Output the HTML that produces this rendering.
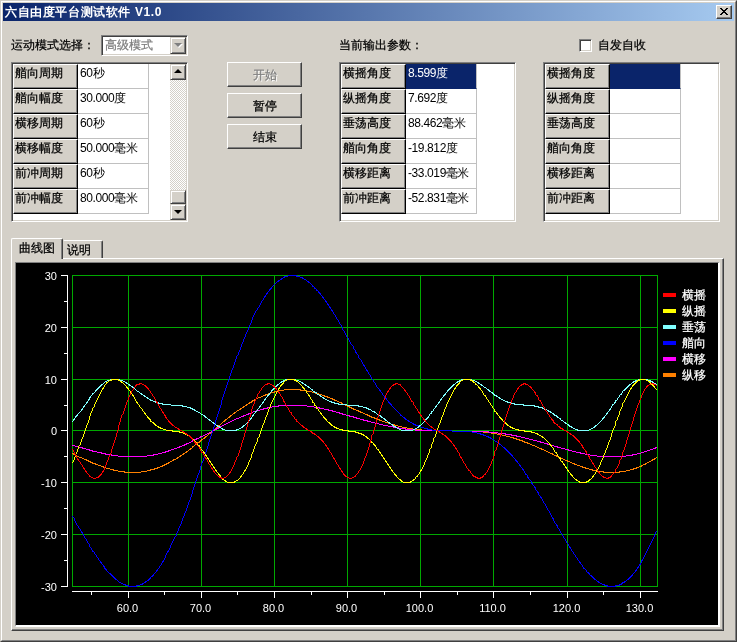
<!DOCTYPE html>
<html lang="zh">
<head>
<meta charset="utf-8">
<title>六自由度平台测试软件 V1.0</title>
<style>
*{box-sizing:border-box;margin:0;padding:0}
html,body{width:737px;height:642px;overflow:hidden;background:#d4d0c8}
body{position:relative;font-family:"Liberation Sans",sans-serif;font-size:12px;line-height:12px;color:#000;-webkit-text-stroke:0.25px}
.abs,body>div,body>svg{position:absolute}
body>div{will-change:transform}
/* window frame */
.frame{left:0;top:0;width:737px;height:642px;border-right:1px solid #404040;border-bottom:1px solid #404040;border-left:1px solid #d4d0c8;border-top:1px solid #d4d0c8}
.frame2{left:1px;top:1px;width:735px;height:640px;border-left:1px solid #fff;border-top:1px solid #fff;border-right:1px solid #808080;border-bottom:1px solid #808080}
.title{left:3px;top:3px;width:731px;height:18px;background:linear-gradient(to right,#0a246a,#a6caf0);color:#fff;font-weight:bold;white-space:nowrap}
.title span{position:absolute;left:2px;top:3px;letter-spacing:0.6px}
.close{left:716px;top:5px;width:16px;height:14px;background:#d4d0c8;border-left:1px solid #fff;border-top:1px solid #fff;border-right:1px solid #404040;border-bottom:1px solid #404040;box-shadow:inset -1px -1px 0 #808080}
.close svg{position:absolute;left:3px;top:2px}
.lbl{white-space:nowrap}
/* combo */
.combo{left:101px;top:35px;width:87px;height:21px;background:#fff;border-left:1px solid #808080;border-top:1px solid #808080;border-right:1px solid #fff;border-bottom:1px solid #fff;box-shadow:inset 1px 1px 0 #404040,inset -1px -1px 0 #d4d0c8;color:#808080}
.combo span{position:absolute;left:3px;top:3px;white-space:nowrap}
.combo .dd{position:absolute;right:1px;top:1px;width:16px;height:17px;background:#d4d0c8;border-left:1px solid #d4d0c8;border-top:1px solid #d4d0c8;border-right:1px solid #404040;border-bottom:1px solid #404040;box-shadow:inset 1px 1px 0 #fff,inset -1px -1px 0 #808080}
.combo .dd i{position:absolute;left:3px;top:5px;width:0;height:0;border-left:4px solid transparent;border-right:4px solid transparent;border-top:4px solid #808080}
.combo .dd i.w{left:4px;top:6px;border-top-color:#fff}
/* list boxes */
.lb{top:62px;width:177px;height:160px;background:#fff;border-left:1px solid #808080;border-top:1px solid #808080;border-right:1px solid #fff;border-bottom:1px solid #fff;box-shadow:inset 1px 1px 0 #404040,inset -1px -1px 0 #d4d0c8}
.lb>div{position:absolute}
.hc{left:1px;width:65px;height:25px;margin-top:-1px;background:#d4d0c8;border-left:1px solid #fff;border-top:1px solid #fff;border-right:1px solid #000;border-bottom:1px solid #000;box-shadow:inset -1px -1px 0 #808080}
.hc span{position:absolute;left:1px;top:2px;white-space:nowrap}
.vc{left:66px;width:71px;height:25px;margin-top:-1px;border-right:1px solid #c0c0c0;border-bottom:1px solid #c0c0c0}
.vc span{position:absolute;left:2px;top:3px;white-space:nowrap;letter-spacing:-0.4px}
.vc.sel{background:#0a246a;color:#fff;border-color:#0a246a;border-right-color:#c0c0c0}
.sb{left:158px;top:1px;width:16px;height:156px;background:#eae8e4;background:#d4d0c8 repeating-conic-gradient(#fff 0 25%,#d4d0c8 0 50%) 0 0/2px 2px}
.sb>div{position:absolute;left:0;width:16px;background:#d4d0c8;border-left:1px solid #d4d0c8;border-top:1px solid #d4d0c8;border-right:1px solid #404040;border-bottom:1px solid #404040;box-shadow:inset 1px 1px 0 #fff,inset -1px -1px 0 #808080}
.sbtn{height:16px}
.sbtn.up{top:0}.sbtn.dn{top:140px}
.thumb{top:126px;height:14px}
.sbtn i{position:absolute;left:3px;width:0;height:0;border-left:4px solid transparent;border-right:4px solid transparent}
.up i{top:4px;border-bottom:4px solid #000}
.dn i{top:5px;border-top:4px solid #000}
/* buttons */
.btn{left:227px;width:75px;height:25px;background:#d4d0c8;border-left:1px solid #fff;border-top:1px solid #fff;border-right:1px solid #404040;border-bottom:1px solid #404040;box-shadow:inset -1px -1px 0 #808080;text-align:center}
.btn span{position:absolute;left:0;right:0;top:6px}
.btn.dis{color:#808080;text-shadow:1px 1px 0 #fff}
/* checkbox */
.cb{left:579px;top:39px;width:13px;height:13px;background:#fff;border-left:1px solid #808080;border-top:1px solid #808080;border-right:1px solid #fff;border-bottom:1px solid #fff;box-shadow:inset 1px 1px 0 #404040,inset -1px -1px 0 #d4d0c8}
/* tabs */
.tabbody{left:11px;top:258px;width:713px;height:373px;border-left:1px solid #fff;border-top:1px solid #fff;border-right:1px solid #404040;border-bottom:1px solid #404040;box-shadow:inset -1px -1px 0 #808080}
.tab{background:#d4d0c8;border-left:1px solid #fff;border-top:1px solid #fff;border-right:1px solid #404040;border-radius:2px 2px 0 0;box-shadow:inset -1px 0 0 #808080}
.tab span{position:absolute;white-space:nowrap}
.tab.on{left:11px;top:238px;width:52px;height:21px}
.tab.on span{left:7px;top:3px}
.tab.off{left:63px;top:240px;width:40px;height:18px;border-left-color:#d4d0c8;border-radius:0 2px 0 0}
.tab.off span{left:3px;top:3px}
.chartwrap{left:15px;top:262px;width:705px;height:365px;border-left:1px solid #808080;border-top:1px solid #808080;border-right:2px solid #fff;border-bottom:2px solid #fff;background:#000}
svg.chart{left:16px;top:263px}
.yl,.xl,.lg{color:#fff;white-space:nowrap}
.yl,.xl,.title,.vc{-webkit-text-stroke:0}
.yl{left:19.6px;width:37px;text-align:right;font-size:11px}
.xl{top:602px;width:41px;text-align:center;font-size:11px}
.lg{left:682px}
</style>
</head>
<body>
<div class="frame"></div>
<div class="frame2"></div>
<div class="title"><span>六自由度平台测试软件 V1.0</span></div>
<div class="close"><svg width="8" height="7" viewBox="0 0 8 7" shape-rendering="crispEdges"><path d="M0 0h2v1h1v1h2V1h1V0h2v1H7v1H6v1H5v1h1v1h1v1h1v1H6V6H5V5H3v1H2v1H0V6h1V5h1V4h1V3H2V2H1V1H0z" fill="#000"/></svg></div>

<div class="lbl" style="left:11px;top:39px">运动模式选择：</div>
<div class="combo"><span>高级模式</span><div class="dd"><i class="w"></i><i></i></div></div>
<div class="lb" style="left:11px">
<div class="hc" style="top:2px"><span>艏向周期</span></div>
<div class="vc" style="top:2px"><span>60秒</span></div>
<div class="hc" style="top:27px"><span>艏向幅度</span></div>
<div class="vc" style="top:27px"><span>30.000度</span></div>
<div class="hc" style="top:52px"><span>横移周期</span></div>
<div class="vc" style="top:52px"><span>60秒</span></div>
<div class="hc" style="top:77px"><span>横移幅度</span></div>
<div class="vc" style="top:77px"><span>50.000毫米</span></div>
<div class="hc" style="top:102px"><span>前冲周期</span></div>
<div class="vc" style="top:102px"><span>60秒</span></div>
<div class="hc" style="top:127px"><span>前冲幅度</span></div>
<div class="vc" style="top:127px"><span>80.000毫米</span></div>
<div class="sb"><div class="sbtn up"><i></i></div><div class="thumb"></div><div class="sbtn dn"><i></i></div></div>
</div>

<div class="btn dis" style="top:62px"><span>开始</span></div>
<div class="btn" style="top:93px"><span>暂停</span></div>
<div class="btn" style="top:124px"><span>结束</span></div>

<div class="lbl" style="left:339px;top:39px">当前输出参数：</div>
<div class="lb" style="left:339px">
<div class="hc" style="top:2px"><span>横摇角度</span></div>
<div class="vc sel" style="top:2px"><span>8.599度</span></div>
<div class="hc" style="top:27px"><span>纵摇角度</span></div>
<div class="vc" style="top:27px"><span>7.692度</span></div>
<div class="hc" style="top:52px"><span>垂荡高度</span></div>
<div class="vc" style="top:52px"><span>88.462毫米</span></div>
<div class="hc" style="top:77px"><span>艏向角度</span></div>
<div class="vc" style="top:77px"><span>-19.812度</span></div>
<div class="hc" style="top:102px"><span>横移距离</span></div>
<div class="vc" style="top:102px"><span>-33.019毫米</span></div>
<div class="hc" style="top:127px"><span>前冲距离</span></div>
<div class="vc" style="top:127px"><span>-52.831毫米</span></div>
</div>

<div class="cb"></div>
<div class="lbl" style="left:598px;top:39px">自发自收</div>
<div class="lb" style="left:543px">
<div class="hc" style="top:2px"><span>横摇角度</span></div>
<div class="vc sel" style="top:2px"><span></span></div>
<div class="hc" style="top:27px"><span>纵摇角度</span></div>
<div class="vc" style="top:27px"><span></span></div>
<div class="hc" style="top:52px"><span>垂荡高度</span></div>
<div class="vc" style="top:52px"><span></span></div>
<div class="hc" style="top:77px"><span>艏向角度</span></div>
<div class="vc" style="top:77px"><span></span></div>
<div class="hc" style="top:102px"><span>横移距离</span></div>
<div class="vc" style="top:102px"><span></span></div>
<div class="hc" style="top:127px"><span>前冲距离</span></div>
<div class="vc" style="top:127px"><span></span></div>
</div>

<div class="tabbody"></div>
<div class="tab off"><span>说明</span></div>
<div class="tab on"><span>曲线图</span></div>
<div class="chartwrap"></div>
<svg class="chart" width="702" height="362" viewBox="16 263 702 362" shape-rendering="crispEdges">
<rect x="16" y="263" width="702" height="362" fill="#000"/>
<rect x="128" y="275" width="1" height="312" fill="#00a800"/>
<rect x="201" y="275" width="1" height="312" fill="#00a800"/>
<rect x="274" y="275" width="1" height="312" fill="#00a800"/>
<rect x="347" y="275" width="1" height="312" fill="#00a800"/>
<rect x="420" y="275" width="1" height="312" fill="#00a800"/>
<rect x="493" y="275" width="1" height="312" fill="#00a800"/>
<rect x="567" y="275" width="1" height="312" fill="#00a800"/>
<rect x="640" y="275" width="1" height="312" fill="#00a800"/>
<rect x="72" y="586" width="586" height="1" fill="#00a800"/>
<rect x="72" y="534" width="586" height="1" fill="#00a800"/>
<rect x="72" y="482" width="586" height="1" fill="#00a800"/>
<rect x="72" y="430" width="586" height="1" fill="#00a800"/>
<rect x="72" y="379" width="586" height="1" fill="#00a800"/>
<rect x="72" y="327" width="586" height="1" fill="#00a800"/>
<rect x="72" y="275" width="586" height="1" fill="#00a800"/>
<rect x="72" y="275" width="1" height="312" fill="#00a800"/>
<rect x="657" y="275" width="1" height="312" fill="#00a800"/>
<path fill="#ff8000" d="M72 453v1h1v-1zM73 453v2h1v-2zM74 454v1h1v-1zM75 455v1h1v-1zM76 455v1h1v-1zM77 456v1h1v-1zM78 456v1h1v-1zM79 457v1h1v-1zM80 457v1h1v-1zM81 457v1h1v-1zM82 458v1h1v-1zM83 458v1h1v-1zM84 459v1h1v-1zM85 459v1h1v-1zM86 459v2h1v-2zM87 460v1h1v-1zM88 460v2h1v-2zM89 461v1h1v-1zM90 461v2h1v-2zM91 462v1h1v-1zM92 462v2h1v-2zM93 463v1h1v-1zM94 463v1h1v-1zM95 463v2h1v-2zM96 464v1h1v-1zM97 464v1h1v-1zM98 465v1h1v-1zM99 465v1h1v-1zM100 465v1h1v-1zM101 466v1h1v-1zM102 466v1h1v-1zM103 466v2h1v-2zM104 467v1h1v-1zM105 467v1h1v-1zM106 468v1h1v-1zM107 468v1h1v-1zM108 468v1h1v-1zM109 468v1h1v-1zM110 469v1h1v-1zM111 469v1h1v-1zM112 469v1h1v-1zM113 469v2h1v-2zM114 470v1h1v-1zM115 470v1h1v-1zM116 470v1h1v-1zM117 470v1h1v-1zM118 471v1h1v-1zM119 471v1h1v-1zM120 471v1h1v-1zM121 471v1h1v-1zM122 471v1h1v-1zM123 471v1h1v-1zM124 471v2h1v-2zM125 472v1h1v-1zM126 472v1h1v-1zM127 472v1h1v-1zM128 472v1h1v-1zM129 472v1h1v-1zM130 472v1h1v-1zM131 472v1h1v-1zM132 472v1h1v-1zM133 472v1h1v-1zM134 472v1h1v-1zM135 472v1h1v-1zM136 472v1h1v-1zM137 472v1h1v-1zM138 472v1h1v-1zM139 472v1h1v-1zM140 472v1h1v-1zM141 471v1h1v-1zM142 471v1h1v-1zM143 471v1h1v-1zM144 471v1h1v-1zM145 471v1h1v-1zM146 471v1h1v-1zM147 470v1h1v-1zM148 470v1h1v-1zM149 470v1h1v-1zM150 469v2h1v-2zM151 469v1h1v-1zM152 469v1h1v-1zM153 469v1h1v-1zM154 468v2h1v-2zM155 468v1h1v-1zM156 468v1h1v-1zM157 467v2h1v-2zM158 467v1h1v-1zM159 467v1h1v-1zM160 466v1h1v-1zM161 466v1h1v-1zM162 465v2h1v-2zM163 465v1h1v-1zM164 464v2h1v-2zM165 464v1h1v-1zM166 463v2h1v-2zM167 463v1h1v-1zM168 462v2h1v-2zM169 462v1h1v-1zM170 461v1h1v-1zM171 461v1h1v-1zM172 460v1h1v-1zM173 459v2h1v-2zM174 459v1h1v-1zM175 459v1h1v-1zM176 458v1h1v-1zM177 457v2h1v-2zM178 457v1h1v-1zM179 456v1h1v-1zM180 455v2h1v-2zM181 455v1h1v-1zM182 454v1h1v-1zM183 453v2h1v-2zM184 453v1h1v-1zM185 452v1h1v-1zM186 451v2h1v-2zM187 451v1h1v-1zM188 450v1h1v-1zM189 449v1h1v-1zM190 448v2h1v-2zM191 448v1h1v-1zM192 446v2h1v-2zM193 446v1h1v-1zM194 445v1h1v-1zM195 444v1h1v-1zM196 443v2h1v-2zM197 442v2h1v-2zM198 442v1h1v-1zM199 441v2h1v-2zM200 440v2h1v-2zM201 439v2h1v-2zM202 439v1h1v-1zM203 438v1h1v-1zM204 437v2h1v-2zM205 436v2h1v-2zM206 436v1h1v-1zM207 435v1h1v-1zM208 434v1h1v-1zM209 433v1h1v-1zM210 432v2h1v-2zM211 431v2h1v-2zM212 430v2h1v-2zM213 430v1h1v-1zM214 429v1h1v-1zM215 428v1h1v-1zM216 427v2h1v-2zM217 426v2h1v-2zM218 425v2h1v-2zM219 425v1h1v-1zM220 424v1h1v-1zM221 423v1h1v-1zM222 422v1h1v-1zM223 421v1h1v-1zM224 420v2h1v-2zM225 419v2h1v-2zM226 419v1h1v-1zM227 418v1h1v-1zM228 417v1h1v-1zM229 416v2h1v-2zM230 415v2h1v-2zM231 415v1h1v-1zM232 414v1h1v-1zM233 413v1h1v-1zM234 412v2h1v-2zM235 412v1h1v-1zM236 411v1h1v-1zM237 410v1h1v-1zM238 410v1h1v-1zM239 409v1h1v-1zM240 408v2h1v-2zM241 408v1h1v-1zM242 407v1h1v-1zM243 406v2h1v-2zM244 406v1h1v-1zM245 405v1h1v-1zM246 404v2h1v-2zM247 404v1h1v-1zM248 403v1h1v-1zM249 402v2h1v-2zM250 402v1h1v-1zM251 401v2h1v-2zM252 400v2h1v-2zM253 400v1h1v-1zM254 399v2h1v-2zM255 399v1h1v-1zM256 398v1h1v-1zM257 398v1h1v-1zM258 397v1h1v-1zM259 397v1h1v-1zM260 397v1h1v-1zM261 396v1h1v-1zM262 396v1h1v-1zM263 395v1h1v-1zM264 395v1h1v-1zM265 394v2h1v-2zM266 394v1h1v-1zM267 394v1h1v-1zM268 393v1h1v-1zM269 393v1h1v-1zM270 393v1h1v-1zM271 392v1h1v-1zM272 392v1h1v-1zM273 392v1h1v-1zM274 391v2h1v-2zM275 391v1h1v-1zM276 391v1h1v-1zM277 391v1h1v-1zM278 390v2h1v-2zM279 390v1h1v-1zM280 390v1h1v-1zM281 390v1h1v-1zM282 390v1h1v-1zM283 390v1h1v-1zM284 389v1h1v-1zM285 389v1h1v-1zM286 389v1h1v-1zM287 389v1h1v-1zM288 389v1h1v-1zM289 389v1h1v-1zM290 389v1h1v-1zM291 389v1h1v-1zM292 389v1h1v-1zM293 389v1h1v-1zM294 389v1h1v-1zM295 389v1h1v-1zM296 389v1h1v-1zM297 389v1h1v-1zM298 389v1h1v-1zM299 389v1h1v-1zM300 389v2h1v-2zM301 390v1h1v-1zM302 390v1h1v-1zM303 390v1h1v-1zM304 390v1h1v-1zM305 390v1h1v-1zM306 390v1h1v-1zM307 391v1h1v-1zM308 391v1h1v-1zM309 391v1h1v-1zM310 391v1h1v-1zM311 391v1h1v-1zM312 392v1h1v-1zM313 392v1h1v-1zM314 392v1h1v-1zM315 393v1h1v-1zM316 393v1h1v-1zM317 393v1h1v-1zM318 393v1h1v-1zM319 394v1h1v-1zM320 394v1h1v-1zM321 394v1h1v-1zM322 395v1h1v-1zM323 395v1h1v-1zM324 395v2h1v-2zM325 396v1h1v-1zM326 396v1h1v-1zM327 396v2h1v-2zM328 397v1h1v-1zM329 397v1h1v-1zM330 398v1h1v-1zM331 398v1h1v-1zM332 398v2h1v-2zM333 399v1h1v-1zM334 399v2h1v-2zM335 400v1h1v-1zM336 400v1h1v-1zM337 401v1h1v-1zM338 401v1h1v-1zM339 402v1h1v-1zM340 402v1h1v-1zM341 402v2h1v-2zM342 403v1h1v-1zM343 404v1h1v-1zM344 404v1h1v-1zM345 405v1h1v-1zM346 405v1h1v-1zM347 405v2h1v-2zM348 406v1h1v-1zM349 406v2h1v-2zM350 407v1h1v-1zM351 407v2h1v-2zM352 408v1h1v-1zM353 408v2h1v-2zM354 409v1h1v-1zM355 409v1h1v-1zM356 410v1h1v-1zM357 410v1h1v-1zM358 410v2h1v-2zM359 411v1h1v-1zM360 411v2h1v-2zM361 412v1h1v-1zM362 412v1h1v-1zM363 413v1h1v-1zM364 413v1h1v-1zM365 414v1h1v-1zM366 414v1h1v-1zM367 414v2h1v-2zM368 415v1h1v-1zM369 415v2h1v-2zM370 416v1h1v-1zM371 416v2h1v-2zM372 417v1h1v-1zM373 417v1h1v-1zM374 417v2h1v-2zM375 418v1h1v-1zM376 418v2h1v-2zM377 419v1h1v-1zM378 419v1h1v-1zM379 419v2h1v-2zM380 420v1h1v-1zM381 420v1h1v-1zM382 421v1h1v-1zM383 421v1h1v-1zM384 421v1h1v-1zM385 422v1h1v-1zM386 422v1h1v-1zM387 422v1h1v-1zM388 423v1h1v-1zM389 423v1h1v-1zM390 423v1h1v-1zM391 424v1h1v-1zM392 424v1h1v-1zM393 424v1h1v-1zM394 424v2h1v-2zM395 425v1h1v-1zM396 425v1h1v-1zM397 425v1h1v-1zM398 426v1h1v-1zM399 426v1h1v-1zM400 426v1h1v-1zM401 426v1h1v-1zM402 427v1h1v-1zM403 427v1h1v-1zM404 427v1h1v-1zM405 427v1h1v-1zM406 427v1h1v-1zM407 428v1h1v-1zM408 428v1h1v-1zM409 428v1h1v-1zM410 428v1h1v-1zM411 428v1h1v-1zM412 428v1h1v-1zM413 429v1h1v-1zM414 429v1h1v-1zM415 429v1h1v-1zM416 429v1h1v-1zM417 429v1h1v-1zM418 429v1h1v-1zM419 429v1h1v-1zM420 429v1h1v-1zM421 429v2h1v-2zM422 430v1h1v-1zM423 430v1h1v-1zM424 430v1h1v-1zM425 430v1h1v-1zM426 430v1h1v-1zM427 430v1h1v-1zM428 430v1h1v-1zM429 430v1h1v-1zM430 430v1h1v-1zM431 430v1h1v-1zM432 430v1h1v-1zM433 430v1h1v-1zM434 430v1h1v-1zM435 430v1h1v-1zM436 430v1h1v-1zM437 430v1h1v-1zM438 430v1h1v-1zM439 430v1h1v-1zM440 430v1h1v-1zM441 430v1h1v-1zM442 430v1h1v-1zM443 430v1h1v-1zM444 430v1h1v-1zM445 430v1h1v-1zM446 430v1h1v-1zM447 430v1h1v-1zM448 430v1h1v-1zM449 430v1h1v-1zM450 430v1h1v-1zM451 430v1h1v-1zM452 431v1h1v-1zM453 431v1h1v-1zM454 431v1h1v-1zM455 431v1h1v-1zM456 431v1h1v-1zM457 431v1h1v-1zM458 431v1h1v-1zM459 431v1h1v-1zM460 431v1h1v-1zM461 431v1h1v-1zM462 431v1h1v-1zM463 431v1h1v-1zM464 431v1h1v-1zM465 431v1h1v-1zM466 431v1h1v-1zM467 431v1h1v-1zM468 431v1h1v-1zM469 431v1h1v-1zM470 431v1h1v-1zM471 431v1h1v-1zM472 431v1h1v-1zM473 431v1h1v-1zM474 431v1h1v-1zM475 431v1h1v-1zM476 431v1h1v-1zM477 431v1h1v-1zM478 431v1h1v-1zM479 431v1h1v-1zM480 431v1h1v-1zM481 431v1h1v-1zM482 431v1h1v-1zM483 432v1h1v-1zM484 432v1h1v-1zM485 432v1h1v-1zM486 432v1h1v-1zM487 432v1h1v-1zM488 432v1h1v-1zM489 432v1h1v-1zM490 432v1h1v-1zM491 433v1h1v-1zM492 433v1h1v-1zM493 433v1h1v-1zM494 433v1h1v-1zM495 433v1h1v-1zM496 433v1h1v-1zM497 434v1h1v-1zM498 434v1h1v-1zM499 434v1h1v-1zM500 434v1h1v-1zM501 434v1h1v-1zM502 435v1h1v-1zM503 435v1h1v-1zM504 435v1h1v-1zM505 435v1h1v-1zM506 436v1h1v-1zM507 436v1h1v-1zM508 436v1h1v-1zM509 436v1h1v-1zM510 437v1h1v-1zM511 437v1h1v-1zM512 437v1h1v-1zM513 437v2h1v-2zM514 438v1h1v-1zM515 438v1h1v-1zM516 438v2h1v-2zM517 439v1h1v-1zM518 439v1h1v-1zM519 439v2h1v-2zM520 440v1h1v-1zM521 440v1h1v-1zM522 440v2h1v-2zM523 441v1h1v-1zM524 441v2h1v-2zM525 442v1h1v-1zM526 442v1h1v-1zM527 442v2h1v-2zM528 443v1h1v-1zM529 443v1h1v-1zM530 444v1h1v-1zM531 444v1h1v-1zM532 445v1h1v-1zM533 445v1h1v-1zM534 445v1h1v-1zM535 446v1h1v-1zM536 446v1h1v-1zM537 447v1h1v-1zM538 447v1h1v-1zM539 448v1h1v-1zM540 448v1h1v-1zM541 448v2h1v-2zM542 449v1h1v-1zM543 449v1h1v-1zM544 450v1h1v-1zM545 450v1h1v-1zM546 451v1h1v-1zM547 451v1h1v-1zM548 452v1h1v-1zM549 452v1h1v-1zM550 453v1h1v-1zM551 453v1h1v-1zM552 453v2h1v-2zM553 454v1h1v-1zM554 455v1h1v-1zM555 455v1h1v-1zM556 455v2h1v-2zM557 456v1h1v-1zM558 457v1h1v-1zM559 457v1h1v-1zM560 457v2h1v-2zM561 458v1h1v-1zM562 458v1h1v-1zM563 459v1h1v-1zM564 459v1h1v-1zM565 460v1h1v-1zM566 460v1h1v-1zM567 460v2h1v-2zM568 461v1h1v-1zM569 461v1h1v-1zM570 462v1h1v-1zM571 462v1h1v-1zM572 463v1h1v-1zM573 463v1h1v-1zM574 463v2h1v-2zM575 464v1h1v-1zM576 464v1h1v-1zM577 465v1h1v-1zM578 465v1h1v-1zM579 465v1h1v-1zM580 466v1h1v-1zM581 466v1h1v-1zM582 466v2h1v-2zM583 467v1h1v-1zM584 467v1h1v-1zM585 467v2h1v-2zM586 468v1h1v-1zM587 468v1h1v-1zM588 468v1h1v-1zM589 469v1h1v-1zM590 469v1h1v-1zM591 469v1h1v-1zM592 469v2h1v-2zM593 470v1h1v-1zM594 470v1h1v-1zM595 470v1h1v-1zM596 470v1h1v-1zM597 471v1h1v-1zM598 471v1h1v-1zM599 471v1h1v-1zM600 471v1h1v-1zM601 471v1h1v-1zM602 471v1h1v-1zM603 471v2h1v-2zM604 472v1h1v-1zM605 472v1h1v-1zM606 472v1h1v-1zM607 472v1h1v-1zM608 472v1h1v-1zM609 472v1h1v-1zM610 472v1h1v-1zM611 472v1h1v-1zM612 472v1h1v-1zM613 472v1h1v-1zM614 472v1h1v-1zM615 472v1h1v-1zM616 472v1h1v-1zM617 472v1h1v-1zM618 472v1h1v-1zM619 471v2h1v-2zM620 471v1h1v-1zM621 471v1h1v-1zM622 471v1h1v-1zM623 471v1h1v-1zM624 471v1h1v-1zM625 471v1h1v-1zM626 470v1h1v-1zM627 470v1h1v-1zM628 470v1h1v-1zM629 470v1h1v-1zM630 469v1h1v-1zM631 469v1h1v-1zM632 469v1h1v-1zM633 468v2h1v-2zM634 468v1h1v-1zM635 468v1h1v-1zM636 467v2h1v-2zM637 467v1h1v-1zM638 467v1h1v-1zM639 466v1h1v-1zM640 466v1h1v-1zM641 465v2h1v-2zM642 465v1h1v-1zM643 464v1h1v-1zM644 464v1h1v-1zM645 463v2h1v-2zM646 463v1h1v-1zM647 462v1h1v-1zM648 462v1h1v-1zM649 461v1h1v-1zM650 461v1h1v-1zM651 460v1h1v-1zM652 459v2h1v-2zM653 459v1h1v-1zM654 458v2h1v-2zM655 458v1h1v-1zM656 457v1h1v-1z"/>
<path fill="#ff00ff" d="M72 445v1h1v-1zM73 445v1h1v-1zM74 445v1h1v-1zM75 446v1h1v-1zM76 446v1h1v-1zM77 446v1h1v-1zM78 446v2h1v-2zM79 447v1h1v-1zM80 447v1h1v-1zM81 447v1h1v-1zM82 447v2h1v-2zM83 448v1h1v-1zM84 448v1h1v-1zM85 448v1h1v-1zM86 449v1h1v-1zM87 449v1h1v-1zM88 449v1h1v-1zM89 449v2h1v-2zM90 450v1h1v-1zM91 450v1h1v-1zM92 450v2h1v-2zM93 451v1h1v-1zM94 451v1h1v-1zM95 451v1h1v-1zM96 451v1h1v-1zM97 452v1h1v-1zM98 452v1h1v-1zM99 452v1h1v-1zM100 452v1h1v-1zM101 452v2h1v-2zM102 453v1h1v-1zM103 453v1h1v-1zM104 453v1h1v-1zM105 453v2h1v-2zM106 454v1h1v-1zM107 454v1h1v-1zM108 454v1h1v-1zM109 454v1h1v-1zM110 454v1h1v-1zM111 454v2h1v-2zM112 455v1h1v-1zM113 455v1h1v-1zM114 455v1h1v-1zM115 455v1h1v-1zM116 455v1h1v-1zM117 455v1h1v-1zM118 456v1h1v-1zM119 456v1h1v-1zM120 456v1h1v-1zM121 456v1h1v-1zM122 456v1h1v-1zM123 456v1h1v-1zM124 456v1h1v-1zM125 456v1h1v-1zM126 456v1h1v-1zM127 456v1h1v-1zM128 456v1h1v-1zM129 456v1h1v-1zM130 456v1h1v-1zM131 456v1h1v-1zM132 456v1h1v-1zM133 456v1h1v-1zM134 456v1h1v-1zM135 456v1h1v-1zM136 456v1h1v-1zM137 456v1h1v-1zM138 456v1h1v-1zM139 456v1h1v-1zM140 456v1h1v-1zM141 456v1h1v-1zM142 456v1h1v-1zM143 456v1h1v-1zM144 456v1h1v-1zM145 456v1h1v-1zM146 456v1h1v-1zM147 455v1h1v-1zM148 455v1h1v-1zM149 455v1h1v-1zM150 455v1h1v-1zM151 455v1h1v-1zM152 455v1h1v-1zM153 454v2h1v-2zM154 454v1h1v-1zM155 454v1h1v-1zM156 454v1h1v-1zM157 454v1h1v-1zM158 453v1h1v-1zM159 453v1h1v-1zM160 453v1h1v-1zM161 453v1h1v-1zM162 452v1h1v-1zM163 452v1h1v-1zM164 452v1h1v-1zM165 451v2h1v-2zM166 451v1h1v-1zM167 451v1h1v-1zM168 450v2h1v-2zM169 450v1h1v-1zM170 450v1h1v-1zM171 449v1h1v-1zM172 449v1h1v-1zM173 449v1h1v-1zM174 448v1h1v-1zM175 448v1h1v-1zM176 448v1h1v-1zM177 447v1h1v-1zM178 447v1h1v-1zM179 446v2h1v-2zM180 446v1h1v-1zM181 446v1h1v-1zM182 445v1h1v-1zM183 445v1h1v-1zM184 444v2h1v-2zM185 444v1h1v-1zM186 443v2h1v-2zM187 443v1h1v-1zM188 443v1h1v-1zM189 442v1h1v-1zM190 442v1h1v-1zM191 441v1h1v-1zM192 440v2h1v-2zM193 440v1h1v-1zM194 439v2h1v-2zM195 439v1h1v-1zM196 438v2h1v-2zM197 438v1h1v-1zM198 438v1h1v-1zM199 437v1h1v-1zM200 436v2h1v-2zM201 436v1h1v-1zM202 436v1h1v-1zM203 435v1h1v-1zM204 435v1h1v-1zM205 434v1h1v-1zM206 434v1h1v-1zM207 433v1h1v-1zM208 433v1h1v-1zM209 432v1h1v-1zM210 432v1h1v-1zM211 431v1h1v-1zM212 430v2h1v-2zM213 430v1h1v-1zM214 429v2h1v-2zM215 429v1h1v-1zM216 428v2h1v-2zM217 428v1h1v-1zM218 427v2h1v-2zM219 427v1h1v-1zM220 426v2h1v-2zM221 426v1h1v-1zM222 425v1h1v-1zM223 425v1h1v-1zM224 424v1h1v-1zM225 424v1h1v-1zM226 423v1h1v-1zM227 423v1h1v-1zM228 422v1h1v-1zM229 422v1h1v-1zM230 421v1h1v-1zM231 421v1h1v-1zM232 420v1h1v-1zM233 420v1h1v-1zM234 419v1h1v-1zM235 419v1h1v-1zM236 418v1h1v-1zM237 418v1h1v-1zM238 418v1h1v-1zM239 417v1h1v-1zM240 417v1h1v-1zM241 416v1h1v-1zM242 416v1h1v-1zM243 415v2h1v-2zM244 415v1h1v-1zM245 415v1h1v-1zM246 414v1h1v-1zM247 414v1h1v-1zM248 413v2h1v-2zM249 413v1h1v-1zM250 413v1h1v-1zM251 412v1h1v-1zM252 412v1h1v-1zM253 411v1h1v-1zM254 411v1h1v-1zM255 411v1h1v-1zM256 410v1h1v-1zM257 410v1h1v-1zM258 410v1h1v-1zM259 410v1h1v-1zM260 409v1h1v-1zM261 409v1h1v-1zM262 409v1h1v-1zM263 408v2h1v-2zM264 408v1h1v-1zM265 408v1h1v-1zM266 408v1h1v-1zM267 407v2h1v-2zM268 407v1h1v-1zM269 407v1h1v-1zM270 407v1h1v-1zM271 407v1h1v-1zM272 406v1h1v-1zM273 406v1h1v-1zM274 406v1h1v-1zM275 406v1h1v-1zM276 406v1h1v-1zM277 406v1h1v-1zM278 405v2h1v-2zM279 405v1h1v-1zM280 405v1h1v-1zM281 405v1h1v-1zM282 405v1h1v-1zM283 405v1h1v-1zM284 405v1h1v-1zM285 405v1h1v-1zM286 405v1h1v-1zM287 405v1h1v-1zM288 405v1h1v-1zM289 405v1h1v-1zM290 405v1h1v-1zM291 405v1h1v-1zM292 405v1h1v-1zM293 405v1h1v-1zM294 405v1h1v-1zM295 405v1h1v-1zM296 405v1h1v-1zM297 405v1h1v-1zM298 405v1h1v-1zM299 405v1h1v-1zM300 405v1h1v-1zM301 405v1h1v-1zM302 405v1h1v-1zM303 405v1h1v-1zM304 405v1h1v-1zM305 405v1h1v-1zM306 405v1h1v-1zM307 406v1h1v-1zM308 406v1h1v-1zM309 406v1h1v-1zM310 406v1h1v-1zM311 406v1h1v-1zM312 406v1h1v-1zM313 406v1h1v-1zM314 407v1h1v-1zM315 407v1h1v-1zM316 407v1h1v-1zM317 407v1h1v-1zM318 407v1h1v-1zM319 407v2h1v-2zM320 408v1h1v-1zM321 408v1h1v-1zM322 408v1h1v-1zM323 408v1h1v-1zM324 409v1h1v-1zM325 409v1h1v-1zM326 409v1h1v-1zM327 409v1h1v-1zM328 409v2h1v-2zM329 410v1h1v-1zM330 410v1h1v-1zM331 410v1h1v-1zM332 410v2h1v-2zM333 411v1h1v-1zM334 411v1h1v-1zM335 411v1h1v-1zM336 412v1h1v-1zM337 412v1h1v-1zM338 412v1h1v-1zM339 412v2h1v-2zM340 413v1h1v-1zM341 413v1h1v-1zM342 413v2h1v-2zM343 414v1h1v-1zM344 414v1h1v-1zM345 414v1h1v-1zM346 415v1h1v-1zM347 415v1h1v-1zM348 415v1h1v-1zM349 415v2h1v-2zM350 416v1h1v-1zM351 416v1h1v-1zM352 416v1h1v-1zM353 416v2h1v-2zM354 417v1h1v-1zM355 417v1h1v-1zM356 417v2h1v-2zM357 418v1h1v-1zM358 418v1h1v-1zM359 418v1h1v-1zM360 419v1h1v-1zM361 419v1h1v-1zM362 419v1h1v-1zM363 419v2h1v-2zM364 420v1h1v-1zM365 420v1h1v-1zM366 420v1h1v-1zM367 420v2h1v-2zM368 421v1h1v-1zM369 421v1h1v-1zM370 421v1h1v-1zM371 422v1h1v-1zM372 422v1h1v-1zM373 422v1h1v-1zM374 422v1h1v-1zM375 423v1h1v-1zM376 423v1h1v-1zM377 423v1h1v-1zM378 423v1h1v-1zM379 424v1h1v-1zM380 424v1h1v-1zM381 424v1h1v-1zM382 424v1h1v-1zM383 425v1h1v-1zM384 425v1h1v-1zM385 425v1h1v-1zM386 425v1h1v-1zM387 425v1h1v-1zM388 426v1h1v-1zM389 426v1h1v-1zM390 426v1h1v-1zM391 426v1h1v-1zM392 426v1h1v-1zM393 427v1h1v-1zM394 427v1h1v-1zM395 427v1h1v-1zM396 427v1h1v-1zM397 427v1h1v-1zM398 427v1h1v-1zM399 428v1h1v-1zM400 428v1h1v-1zM401 428v1h1v-1zM402 428v1h1v-1zM403 428v1h1v-1zM404 428v1h1v-1zM405 428v2h1v-2zM406 429v1h1v-1zM407 429v1h1v-1zM408 429v1h1v-1zM409 429v1h1v-1zM410 429v1h1v-1zM411 429v1h1v-1zM412 429v1h1v-1zM413 429v1h1v-1zM414 429v1h1v-1zM415 429v2h1v-2zM416 430v1h1v-1zM417 430v1h1v-1zM418 430v1h1v-1zM419 430v1h1v-1zM420 430v1h1v-1zM421 430v1h1v-1zM422 430v1h1v-1zM423 430v1h1v-1zM424 430v1h1v-1zM425 430v1h1v-1zM426 430v1h1v-1zM427 430v1h1v-1zM428 430v1h1v-1zM429 430v1h1v-1zM430 430v1h1v-1zM431 430v1h1v-1zM432 430v1h1v-1zM433 430v1h1v-1zM434 430v1h1v-1zM435 430v1h1v-1zM436 430v1h1v-1zM437 430v1h1v-1zM438 430v1h1v-1zM439 430v1h1v-1zM440 430v1h1v-1zM441 430v1h1v-1zM442 430v1h1v-1zM443 430v1h1v-1zM444 430v1h1v-1zM445 430v1h1v-1zM446 430v1h1v-1zM447 430v1h1v-1zM448 430v1h1v-1zM449 430v1h1v-1zM450 430v1h1v-1zM451 430v1h1v-1zM452 431v1h1v-1zM453 431v1h1v-1zM454 431v1h1v-1zM455 431v1h1v-1zM456 431v1h1v-1zM457 431v1h1v-1zM458 431v1h1v-1zM459 431v1h1v-1zM460 431v1h1v-1zM461 431v1h1v-1zM462 431v1h1v-1zM463 431v1h1v-1zM464 431v1h1v-1zM465 431v1h1v-1zM466 431v1h1v-1zM467 431v1h1v-1zM468 431v1h1v-1zM469 431v1h1v-1zM470 431v1h1v-1zM471 431v1h1v-1zM472 431v1h1v-1zM473 431v1h1v-1zM474 431v1h1v-1zM475 431v1h1v-1zM476 431v1h1v-1zM477 431v1h1v-1zM478 431v1h1v-1zM479 431v1h1v-1zM480 431v1h1v-1zM481 431v1h1v-1zM482 431v1h1v-1zM483 431v1h1v-1zM484 431v1h1v-1zM485 431v1h1v-1zM486 431v1h1v-1zM487 431v1h1v-1zM488 431v2h1v-2zM489 432v1h1v-1zM490 432v1h1v-1zM491 432v1h1v-1zM492 432v1h1v-1zM493 432v1h1v-1zM494 432v1h1v-1zM495 432v1h1v-1zM496 432v1h1v-1zM497 432v1h1v-1zM498 433v1h1v-1zM499 433v1h1v-1zM500 433v1h1v-1zM501 433v1h1v-1zM502 433v1h1v-1zM503 433v1h1v-1zM504 433v1h1v-1zM505 433v2h1v-2zM506 434v1h1v-1zM507 434v1h1v-1zM508 434v1h1v-1zM509 434v1h1v-1zM510 434v1h1v-1zM511 434v2h1v-2zM512 435v1h1v-1zM513 435v1h1v-1zM514 435v1h1v-1zM515 435v1h1v-1zM516 435v2h1v-2zM517 436v1h1v-1zM518 436v1h1v-1zM519 436v1h1v-1zM520 436v1h1v-1zM521 437v1h1v-1zM522 437v1h1v-1zM523 437v1h1v-1zM524 437v1h1v-1zM525 438v1h1v-1zM526 438v1h1v-1zM527 438v1h1v-1zM528 438v1h1v-1zM529 439v1h1v-1zM530 439v1h1v-1zM531 439v1h1v-1zM532 439v1h1v-1zM533 440v1h1v-1zM534 440v1h1v-1zM535 440v1h1v-1zM536 440v1h1v-1zM537 441v1h1v-1zM538 441v1h1v-1zM539 441v1h1v-1zM540 441v2h1v-2zM541 442v1h1v-1zM542 442v1h1v-1zM543 442v1h1v-1zM544 443v1h1v-1zM545 443v1h1v-1zM546 443v1h1v-1zM547 443v2h1v-2zM548 444v1h1v-1zM549 444v1h1v-1zM550 444v1h1v-1zM551 445v1h1v-1zM552 445v1h1v-1zM553 445v1h1v-1zM554 446v1h1v-1zM555 446v1h1v-1zM556 446v1h1v-1zM557 446v2h1v-2zM558 447v1h1v-1zM559 447v1h1v-1zM560 447v1h1v-1zM561 448v1h1v-1zM562 448v1h1v-1zM563 448v1h1v-1zM564 448v1h1v-1zM565 449v1h1v-1zM566 449v1h1v-1zM567 449v1h1v-1zM568 449v2h1v-2zM569 450v1h1v-1zM570 450v1h1v-1zM571 450v1h1v-1zM572 451v1h1v-1zM573 451v1h1v-1zM574 451v1h1v-1zM575 451v1h1v-1zM576 452v1h1v-1zM577 452v1h1v-1zM578 452v1h1v-1zM579 452v1h1v-1zM580 452v2h1v-2zM581 453v1h1v-1zM582 453v1h1v-1zM583 453v1h1v-1zM584 453v1h1v-1zM585 454v1h1v-1zM586 454v1h1v-1zM587 454v1h1v-1zM588 454v1h1v-1zM589 454v1h1v-1zM590 455v1h1v-1zM591 455v1h1v-1zM592 455v1h1v-1zM593 455v1h1v-1zM594 455v1h1v-1zM595 455v1h1v-1zM596 455v1h1v-1zM597 456v1h1v-1zM598 456v1h1v-1zM599 456v1h1v-1zM600 456v1h1v-1zM601 456v1h1v-1zM602 456v1h1v-1zM603 456v1h1v-1zM604 456v1h1v-1zM605 456v1h1v-1zM606 456v1h1v-1zM607 456v1h1v-1zM608 456v1h1v-1zM609 456v1h1v-1zM610 456v1h1v-1zM611 456v1h1v-1zM612 456v1h1v-1zM613 456v1h1v-1zM614 456v1h1v-1zM615 456v1h1v-1zM616 456v1h1v-1zM617 456v1h1v-1zM618 456v1h1v-1zM619 456v1h1v-1zM620 456v1h1v-1zM621 456v1h1v-1zM622 456v1h1v-1zM623 456v1h1v-1zM624 456v1h1v-1zM625 456v1h1v-1zM626 455v1h1v-1zM627 455v1h1v-1zM628 455v1h1v-1zM629 455v1h1v-1zM630 455v1h1v-1zM631 455v1h1v-1zM632 454v2h1v-2zM633 454v1h1v-1zM634 454v1h1v-1zM635 454v1h1v-1zM636 454v1h1v-1zM637 453v1h1v-1zM638 453v1h1v-1zM639 453v1h1v-1zM640 453v1h1v-1zM641 452v1h1v-1zM642 452v1h1v-1zM643 452v1h1v-1zM644 451v1h1v-1zM645 451v1h1v-1zM646 451v1h1v-1zM647 450v1h1v-1zM648 450v1h1v-1zM649 450v1h1v-1zM650 449v1h1v-1zM651 449v1h1v-1zM652 449v1h1v-1zM653 448v1h1v-1zM654 448v1h1v-1zM655 447v2h1v-2zM656 447v1h1v-1z"/>
<path fill="#0000ff" d="M72 516v1h1v-1zM73 517v1h1v-1zM74 518v3h1v-3zM75 521v2h1v-2zM76 523v2h1v-2zM77 525v1h1v-1zM78 526v2h1v-2zM79 528v1h1v-1zM80 529v2h1v-2zM81 531v2h1v-2zM82 532v2h1v-2zM83 534v2h1v-2zM84 536v2h1v-2zM85 538v1h1v-1zM86 539v2h1v-2zM87 541v2h1v-2zM88 543v1h1v-1zM89 544v3h1v-3zM90 547v1h1v-1zM91 548v2h1v-2zM92 550v2h1v-2zM93 551v1h1v-1zM94 552v2h1v-2zM95 554v1h1v-1zM96 555v2h1v-2zM97 557v1h1v-1zM98 558v2h1v-2zM99 560v1h1v-1zM100 561v2h1v-2zM101 562v2h1v-2zM102 564v1h1v-1zM103 565v2h1v-2zM104 566v3h1v-3zM105 568v2h1v-2zM106 569v2h1v-2zM107 571v1h1v-1zM108 572v1h1v-1zM109 573v1h1v-1zM110 573v2h1v-2zM111 574v2h1v-2zM112 575v2h1v-2zM113 576v2h1v-2zM114 577v2h1v-2zM115 578v2h1v-2zM116 579v1h1v-1zM117 580v1h1v-1zM118 581v1h1v-1zM119 582v1h1v-1zM120 582v1h1v-1zM121 583v1h1v-1zM122 583v1h1v-1zM123 584v1h1v-1zM124 584v1h1v-1zM125 584v2h1v-2zM126 585v1h1v-1zM127 585v1h1v-1zM128 585v2h1v-2zM129 586v1h1v-1zM130 586v1h1v-1zM131 586v1h1v-1zM132 586v1h1v-1zM133 586v1h1v-1zM134 586v1h1v-1zM135 586v1h1v-1zM136 585v2h1v-2zM137 585v1h1v-1zM138 585v1h1v-1zM139 585v1h1v-1zM140 584v1h1v-1zM141 584v1h1v-1zM142 583v2h1v-2zM143 583v1h1v-1zM144 582v1h1v-1zM145 581v2h1v-2zM146 581v1h1v-1zM147 580v1h1v-1zM148 579v2h1v-2zM149 578v2h1v-2zM150 577v2h1v-2zM151 576v1h1v-1zM152 575v2h1v-2zM153 574v2h1v-2zM154 573v1h1v-1zM155 572v1h1v-1zM156 570v2h1v-2zM157 569v2h1v-2zM158 568v1h1v-1zM159 566v2h1v-2zM160 565v1h1v-1zM161 563v2h1v-2zM162 561v2h1v-2zM163 560v2h1v-2zM164 558v2h1v-2zM165 555v3h1v-3zM166 553v2h1v-2zM167 551v2h1v-2zM168 550v2h1v-2zM169 548v2h1v-2zM170 545v3h1v-3zM171 543v2h1v-2zM172 541v2h1v-2zM173 539v2h1v-2zM174 537v2h1v-2zM175 536v1h1v-1zM176 533v3h1v-3zM177 531v2h1v-2zM178 528v3h1v-3zM179 526v2h1v-2zM180 524v2h1v-2zM181 521v3h1v-3zM182 518v3h1v-3zM183 516v2h1v-2zM184 513v3h1v-3zM185 511v2h1v-2zM186 508v3h1v-3zM187 505v3h1v-3zM188 502v3h1v-3zM189 500v2h1v-2zM190 497v3h1v-3zM191 494v3h1v-3zM192 490v4h1v-4zM193 487v3h1v-3zM194 484v3h1v-3zM195 481v3h1v-3zM196 478v3h1v-3zM197 475v3h1v-3zM198 473v2h1v-2zM199 470v3h1v-3zM200 466v4h1v-4zM201 463v3h1v-3zM202 461v2h1v-2zM203 458v3h1v-3zM204 455v3h1v-3zM205 452v3h1v-3zM206 449v3h1v-3zM207 446v3h1v-3zM208 442v4h1v-4zM209 439v3h1v-3zM210 436v3h1v-3zM211 433v3h1v-3zM212 430v3h1v-3zM213 427v3h1v-3zM214 424v3h1v-3zM215 420v4h1v-4zM216 417v3h1v-3zM217 414v3h1v-3zM218 411v3h1v-3zM219 408v3h1v-3zM220 405v3h1v-3zM221 400v5h1v-5zM222 397v3h1v-3zM223 394v3h1v-3zM224 391v3h1v-3zM225 388v3h1v-3zM226 385v3h1v-3zM227 382v3h1v-3zM228 379v3h1v-3zM229 376v3h1v-3zM230 373v3h1v-3zM231 370v3h1v-3zM232 368v2h1v-2zM233 365v3h1v-3zM234 362v3h1v-3zM235 359v3h1v-3zM236 356v3h1v-3zM237 355v1h1v-1zM238 352v3h1v-3zM239 350v2h1v-2zM240 347v3h1v-3zM241 344v3h1v-3zM242 342v2h1v-2zM243 339v3h1v-3zM244 337v2h1v-2zM245 334v3h1v-3zM246 332v2h1v-2zM247 330v2h1v-2zM248 327v3h1v-3zM249 325v2h1v-2zM250 323v2h1v-2zM251 320v3h1v-3zM252 317v3h1v-3zM253 315v2h1v-2zM254 313v2h1v-2zM255 311v2h1v-2zM256 310v1h1v-1zM257 308v2h1v-2zM258 307v1h1v-1zM259 305v2h1v-2zM260 303v2h1v-2zM261 301v2h1v-2zM262 300v1h1v-1zM263 298v2h1v-2zM264 296v2h1v-2zM265 295v2h1v-2zM266 293v2h1v-2zM267 292v2h1v-2zM268 291v1h1v-1zM269 289v2h1v-2zM270 288v2h1v-2zM271 287v2h1v-2zM272 286v1h1v-1zM273 285v1h1v-1zM274 284v1h1v-1zM275 283v1h1v-1zM276 282v1h1v-1zM277 281v1h1v-1zM278 280v2h1v-2zM279 280v1h1v-1zM280 279v1h1v-1zM281 278v2h1v-2zM282 278v1h1v-1zM283 277v1h1v-1zM284 276v2h1v-2zM285 276v1h1v-1zM286 276v1h1v-1zM287 276v1h1v-1zM288 275v1h1v-1zM289 275v1h1v-1zM290 275v1h1v-1zM291 275v1h1v-1zM292 275v1h1v-1zM293 275v1h1v-1zM294 275v1h1v-1zM295 275v1h1v-1zM296 275v2h1v-2zM297 276v1h1v-1zM298 276v1h1v-1zM299 276v1h1v-1zM300 277v1h1v-1zM301 277v1h1v-1zM302 277v2h1v-2zM303 278v1h1v-1zM304 279v1h1v-1zM305 279v1h1v-1zM306 280v1h1v-1zM307 281v1h1v-1zM308 281v2h1v-2zM309 282v1h1v-1zM310 283v1h1v-1zM311 284v1h1v-1zM312 285v2h1v-2zM313 286v1h1v-1zM314 287v2h1v-2zM315 288v1h1v-1zM316 289v2h1v-2zM317 290v1h1v-1zM318 291v2h1v-2zM319 292v2h1v-2zM320 293v2h1v-2zM321 295v1h1v-1zM322 296v2h1v-2zM323 297v2h1v-2zM324 299v1h1v-1zM325 300v2h1v-2zM326 301v2h1v-2zM327 303v2h1v-2zM328 304v2h1v-2zM329 306v2h1v-2zM330 307v2h1v-2zM331 309v2h1v-2zM332 310v2h1v-2zM333 312v2h1v-2zM334 314v1h1v-1zM335 315v2h1v-2zM336 317v2h1v-2zM337 319v1h1v-1zM338 320v2h1v-2zM339 322v2h1v-2zM340 324v1h1v-1zM341 325v2h1v-2zM342 327v3h1v-3zM343 330v1h1v-1zM344 331v2h1v-2zM345 333v2h1v-2zM346 335v2h1v-2zM347 337v1h1v-1zM348 338v2h1v-2zM349 340v2h1v-2zM350 342v2h1v-2zM351 344v1h1v-1zM352 345v1h1v-1zM353 346v3h1v-3zM354 349v1h1v-1zM355 350v3h1v-3zM356 352v2h1v-2zM357 354v1h1v-1zM358 355v3h1v-3zM359 358v1h1v-1zM360 359v1h1v-1zM361 360v2h1v-2zM362 362v2h1v-2zM363 364v2h1v-2zM364 365v2h1v-2zM365 367v2h1v-2zM366 369v2h1v-2zM367 370v2h1v-2zM368 372v2h1v-2zM369 374v1h1v-1zM370 375v2h1v-2zM371 377v2h1v-2zM372 379v1h1v-1zM373 380v2h1v-2zM374 382v1h1v-1zM375 383v2h1v-2zM376 385v2h1v-2zM377 387v1h1v-1zM378 388v1h1v-1zM379 389v2h1v-2zM380 390v2h1v-2zM381 392v1h1v-1zM382 393v2h1v-2zM383 395v1h1v-1zM384 396v2h1v-2zM385 397v2h1v-2zM386 398v2h1v-2zM387 400v1h1v-1zM388 401v2h1v-2zM389 402v2h1v-2zM390 403v2h1v-2zM391 404v2h1v-2zM392 406v1h1v-1zM393 407v1h1v-1zM394 408v1h1v-1zM395 409v1h1v-1zM396 410v1h1v-1zM397 411v1h1v-1zM398 412v1h1v-1zM399 413v1h1v-1zM400 414v2h1v-2zM401 415v1h1v-1zM402 416v1h1v-1zM403 417v1h1v-1zM404 417v2h1v-2zM405 418v2h1v-2zM406 419v1h1v-1zM407 420v1h1v-1zM408 420v2h1v-2zM409 421v1h1v-1zM410 422v1h1v-1zM411 422v1h1v-1zM412 423v1h1v-1zM413 423v2h1v-2zM414 424v1h1v-1zM415 424v2h1v-2zM416 425v1h1v-1zM417 425v1h1v-1zM418 425v2h1v-2zM419 426v1h1v-1zM420 426v1h1v-1zM421 427v1h1v-1zM422 427v1h1v-1zM423 427v1h1v-1zM424 428v1h1v-1zM425 428v1h1v-1zM426 428v1h1v-1zM427 428v2h1v-2zM428 429v1h1v-1zM429 429v1h1v-1zM430 429v1h1v-1zM431 429v1h1v-1zM432 430v1h1v-1zM433 430v1h1v-1zM434 430v1h1v-1zM435 430v1h1v-1zM436 430v1h1v-1zM437 430v1h1v-1zM438 430v1h1v-1zM439 430v1h1v-1zM440 430v1h1v-1zM441 430v1h1v-1zM442 430v1h1v-1zM443 430v1h1v-1zM444 430v1h1v-1zM445 430v1h1v-1zM446 430v1h1v-1zM447 430v1h1v-1zM448 430v1h1v-1zM449 430v1h1v-1zM450 430v1h1v-1zM451 430v1h1v-1zM452 431v1h1v-1zM453 431v1h1v-1zM454 431v1h1v-1zM455 431v1h1v-1zM456 431v1h1v-1zM457 431v1h1v-1zM458 431v1h1v-1zM459 431v1h1v-1zM460 431v1h1v-1zM461 431v1h1v-1zM462 431v1h1v-1zM463 431v1h1v-1zM464 431v1h1v-1zM465 431v1h1v-1zM466 431v1h1v-1zM467 431v1h1v-1zM468 431v1h1v-1zM469 431v1h1v-1zM470 431v1h1v-1zM471 431v1h1v-1zM472 432v1h1v-1zM473 432v1h1v-1zM474 432v1h1v-1zM475 432v1h1v-1zM476 432v1h1v-1zM477 433v1h1v-1zM478 433v1h1v-1zM479 433v1h1v-1zM480 433v2h1v-2zM481 434v1h1v-1zM482 434v1h1v-1zM483 434v2h1v-2zM484 435v1h1v-1zM485 435v1h1v-1zM486 436v1h1v-1zM487 436v1h1v-1zM488 436v2h1v-2zM489 437v1h1v-1zM490 437v2h1v-2zM491 438v1h1v-1zM492 439v1h1v-1zM493 439v1h1v-1zM494 440v1h1v-1zM495 441v1h1v-1zM496 441v1h1v-1zM497 442v1h1v-1zM498 443v1h1v-1zM499 443v2h1v-2zM500 444v1h1v-1zM501 445v1h1v-1zM502 446v1h1v-1zM503 447v1h1v-1zM504 447v2h1v-2zM505 448v2h1v-2zM506 449v2h1v-2zM507 450v2h1v-2zM508 451v2h1v-2zM509 452v2h1v-2zM510 453v2h1v-2zM511 454v2h1v-2zM512 455v2h1v-2zM513 457v1h1v-1zM514 458v1h1v-1zM515 459v2h1v-2zM516 460v2h1v-2zM517 461v2h1v-2zM518 463v1h1v-1zM519 464v2h1v-2zM520 465v2h1v-2zM521 467v1h1v-1zM522 468v2h1v-2zM523 469v2h1v-2zM524 471v2h1v-2zM525 473v2h1v-2zM526 474v1h1v-1zM527 475v3h1v-3zM528 477v2h1v-2zM529 479v1h1v-1zM530 480v1h1v-1zM531 481v3h1v-3zM532 483v2h1v-2zM533 485v1h1v-1zM534 486v2h1v-2zM535 487v3h1v-3zM536 490v1h1v-1zM537 491v2h1v-2zM538 492v3h1v-3zM539 495v1h1v-1zM540 496v2h1v-2zM541 497v2h1v-2zM542 499v2h1v-2zM543 501v2h1v-2zM544 503v1h1v-1zM545 504v2h1v-2zM546 506v2h1v-2zM547 508v2h1v-2zM548 510v1h1v-1zM549 511v2h1v-2zM550 513v2h1v-2zM551 515v2h1v-2zM552 517v2h1v-2zM553 518v3h1v-3zM554 521v2h1v-2zM555 523v1h1v-1zM556 524v2h1v-2zM557 525v3h1v-3zM558 528v1h1v-1zM559 529v2h1v-2zM560 531v2h1v-2zM561 533v1h1v-1zM562 534v2h1v-2zM563 536v2h1v-2zM564 538v1h1v-1zM565 539v2h1v-2zM566 541v2h1v-2zM567 543v1h1v-1zM568 544v2h1v-2zM569 546v2h1v-2zM570 547v2h1v-2zM571 549v2h1v-2zM572 551v1h1v-1zM573 552v2h1v-2zM574 554v1h1v-1zM575 555v2h1v-2zM576 557v1h1v-1zM577 558v2h1v-2zM578 560v1h1v-1zM579 561v2h1v-2zM580 562v2h1v-2zM581 564v1h1v-1zM582 565v2h1v-2zM583 567v2h1v-2zM584 568v1h1v-1zM585 569v1h1v-1zM586 570v2h1v-2zM587 572v1h1v-1zM588 572v2h1v-2zM589 573v2h1v-2zM590 575v1h1v-1zM591 575v2h1v-2zM592 576v2h1v-2zM593 577v2h1v-2zM594 578v2h1v-2zM595 579v1h1v-1zM596 580v1h1v-1zM597 581v1h1v-1zM598 581v2h1v-2zM599 582v1h1v-1zM600 583v1h1v-1zM601 583v1h1v-1zM602 584v1h1v-1zM603 584v1h1v-1zM604 584v2h1v-2zM605 585v1h1v-1zM606 585v1h1v-1zM607 585v2h1v-2zM608 586v1h1v-1zM609 586v1h1v-1zM610 586v1h1v-1zM611 586v1h1v-1zM612 586v1h1v-1zM613 586v1h1v-1zM614 586v1h1v-1zM615 585v2h1v-2zM616 585v1h1v-1zM617 585v1h1v-1zM618 585v1h1v-1zM619 584v2h1v-2zM620 584v1h1v-1zM621 583v2h1v-2zM622 582v2h1v-2zM623 582v1h1v-1zM624 581v2h1v-2zM625 581v1h1v-1zM626 580v1h1v-1zM627 579v1h1v-1zM628 578v2h1v-2zM629 577v2h1v-2zM630 576v2h1v-2zM631 575v2h1v-2zM632 574v2h1v-2zM633 573v1h1v-1zM634 572v1h1v-1zM635 570v2h1v-2zM636 569v2h1v-2zM637 567v2h1v-2zM638 566v2h1v-2zM639 564v2h1v-2zM640 563v2h1v-2zM641 560v3h1v-3zM642 559v2h1v-2zM643 557v2h1v-2zM644 555v2h1v-2zM645 553v2h1v-2zM646 551v2h1v-2zM647 549v2h1v-2zM648 547v2h1v-2zM649 545v2h1v-2zM650 543v2h1v-2zM651 541v2h1v-2zM652 539v2h1v-2zM653 537v2h1v-2zM654 534v3h1v-3zM655 532v2h1v-2zM656 531v1h1v-1z"/>
<path fill="#80ffff" d="M72 421v1h1v-1zM73 419v2h1v-2zM74 418v2h1v-2zM75 416v2h1v-2zM76 415v2h1v-2zM77 414v2h1v-2zM78 413v1h1v-1zM79 412v1h1v-1zM80 411v1h1v-1zM81 409v2h1v-2zM82 408v2h1v-2zM83 406v2h1v-2zM84 405v2h1v-2zM85 404v1h1v-1zM86 402v2h1v-2zM87 401v2h1v-2zM88 399v2h1v-2zM89 397v3h1v-3zM90 396v2h1v-2zM91 395v1h1v-1zM92 393v2h1v-2zM93 393v1h1v-1zM94 392v1h1v-1zM95 390v2h1v-2zM96 389v2h1v-2zM97 388v2h1v-2zM98 387v2h1v-2zM99 386v2h1v-2zM100 385v2h1v-2zM101 384v2h1v-2zM102 384v1h1v-1zM103 383v1h1v-1zM104 382v1h1v-1zM105 381v1h1v-1zM106 381v1h1v-1zM107 380v1h1v-1zM108 380v1h1v-1zM109 380v1h1v-1zM110 379v1h1v-1zM111 379v1h1v-1zM112 379v1h1v-1zM113 379v1h1v-1zM114 379v1h1v-1zM115 379v1h1v-1zM116 379v1h1v-1zM117 379v1h1v-1zM118 379v1h1v-1zM119 379v2h1v-2zM120 380v1h1v-1zM121 380v1h1v-1zM122 380v1h1v-1zM123 381v1h1v-1zM124 381v1h1v-1zM125 382v1h1v-1zM126 382v2h1v-2zM127 383v1h1v-1zM128 384v1h1v-1zM129 384v2h1v-2zM130 385v1h1v-1zM131 386v1h1v-1zM132 386v2h1v-2zM133 387v1h1v-1zM134 388v1h1v-1zM135 389v1h1v-1zM136 390v1h1v-1zM137 391v1h1v-1zM138 391v1h1v-1zM139 392v1h1v-1zM140 393v1h1v-1zM141 393v2h1v-2zM142 394v1h1v-1zM143 395v1h1v-1zM144 395v2h1v-2zM145 396v1h1v-1zM146 397v1h1v-1zM147 397v2h1v-2zM148 398v1h1v-1zM149 399v1h1v-1zM150 399v2h1v-2zM151 400v1h1v-1zM152 400v1h1v-1zM153 401v1h1v-1zM154 401v1h1v-1zM155 401v2h1v-2zM156 402v1h1v-1zM157 402v1h1v-1zM158 402v2h1v-2zM159 403v1h1v-1zM160 403v1h1v-1zM161 403v1h1v-1zM162 403v2h1v-2zM163 404v1h1v-1zM164 404v1h1v-1zM165 404v1h1v-1zM166 404v1h1v-1zM167 404v1h1v-1zM168 404v1h1v-1zM169 404v1h1v-1zM170 404v1h1v-1zM171 405v1h1v-1zM172 405v1h1v-1zM173 405v1h1v-1zM174 405v1h1v-1zM175 405v1h1v-1zM176 405v1h1v-1zM177 405v1h1v-1zM178 405v1h1v-1zM179 405v1h1v-1zM180 405v1h1v-1zM181 405v1h1v-1zM182 405v2h1v-2zM183 406v1h1v-1zM184 406v1h1v-1zM185 406v1h1v-1zM186 406v1h1v-1zM187 407v1h1v-1zM188 407v1h1v-1zM189 407v1h1v-1zM190 407v2h1v-2zM191 408v1h1v-1zM192 408v2h1v-2zM193 409v1h1v-1zM194 409v2h1v-2zM195 410v1h1v-1zM196 411v1h1v-1zM197 411v1h1v-1zM198 412v1h1v-1zM199 412v1h1v-1zM200 413v1h1v-1zM201 414v1h1v-1zM202 414v1h1v-1zM203 415v1h1v-1zM204 415v2h1v-2zM205 416v2h1v-2zM206 417v1h1v-1zM207 418v1h1v-1zM208 419v1h1v-1zM209 419v2h1v-2zM210 420v1h1v-1zM211 421v1h1v-1zM212 422v1h1v-1zM213 422v2h1v-2zM214 423v1h1v-1zM215 424v1h1v-1zM216 425v1h1v-1zM217 425v2h1v-2zM218 426v1h1v-1zM219 426v2h1v-2zM220 427v1h1v-1zM221 428v1h1v-1zM222 428v2h1v-2zM223 429v1h1v-1zM224 429v1h1v-1zM225 430v1h1v-1zM226 430v1h1v-1zM227 430v1h1v-1zM228 430v1h1v-1zM229 430v1h1v-1zM230 430v1h1v-1zM231 430v1h1v-1zM232 430v1h1v-1zM233 430v1h1v-1zM234 430v1h1v-1zM235 430v1h1v-1zM236 429v2h1v-2zM237 429v1h1v-1zM238 429v1h1v-1zM239 428v1h1v-1zM240 428v1h1v-1zM241 427v1h1v-1zM242 426v2h1v-2zM243 425v2h1v-2zM244 425v1h1v-1zM245 424v1h1v-1zM246 423v1h1v-1zM247 422v1h1v-1zM248 421v1h1v-1zM249 419v2h1v-2zM250 418v2h1v-2zM251 417v2h1v-2zM252 415v2h1v-2zM253 414v2h1v-2zM254 413v1h1v-1zM255 411v2h1v-2zM256 411v1h1v-1zM257 409v2h1v-2zM258 408v1h1v-1zM259 406v2h1v-2zM260 405v2h1v-2zM261 404v1h1v-1zM262 402v2h1v-2zM263 401v2h1v-2zM264 399v2h1v-2zM265 398v2h1v-2zM266 397v1h1v-1zM267 395v2h1v-2zM268 394v2h1v-2zM269 393v2h1v-2zM270 392v1h1v-1zM271 390v2h1v-2zM272 389v2h1v-2zM273 388v2h1v-2zM274 387v2h1v-2zM275 386v2h1v-2zM276 385v2h1v-2zM277 384v2h1v-2zM278 384v1h1v-1zM279 383v1h1v-1zM280 382v1h1v-1zM281 381v2h1v-2zM282 381v1h1v-1zM283 380v2h1v-2zM284 380v1h1v-1zM285 379v2h1v-2zM286 379v1h1v-1zM287 379v1h1v-1zM288 379v1h1v-1zM289 379v1h1v-1zM290 379v1h1v-1zM291 379v1h1v-1zM292 379v1h1v-1zM293 379v1h1v-1zM294 379v1h1v-1zM295 379v1h1v-1zM296 380v1h1v-1zM297 380v1h1v-1zM298 380v1h1v-1zM299 381v1h1v-1zM300 381v1h1v-1zM301 382v1h1v-1zM302 382v2h1v-2zM303 383v1h1v-1zM304 384v1h1v-1zM305 384v2h1v-2zM306 385v1h1v-1zM307 386v1h1v-1zM308 386v2h1v-2zM309 387v1h1v-1zM310 388v1h1v-1zM311 389v1h1v-1zM312 389v2h1v-2zM313 391v1h1v-1zM314 391v2h1v-2zM315 392v1h1v-1zM316 392v2h1v-2zM317 394v1h1v-1zM318 394v1h1v-1zM319 395v1h1v-1zM320 395v2h1v-2zM321 396v1h1v-1zM322 397v1h1v-1zM323 397v2h1v-2zM324 398v1h1v-1zM325 399v1h1v-1zM326 399v1h1v-1zM327 400v1h1v-1zM328 400v1h1v-1zM329 401v1h1v-1zM330 401v1h1v-1zM331 401v2h1v-2zM332 402v1h1v-1zM333 402v1h1v-1zM334 402v2h1v-2zM335 403v1h1v-1zM336 403v1h1v-1zM337 403v1h1v-1zM338 403v2h1v-2zM339 404v1h1v-1zM340 404v1h1v-1zM341 404v1h1v-1zM342 404v1h1v-1zM343 404v1h1v-1zM344 404v1h1v-1zM345 404v1h1v-1zM346 404v1h1v-1zM347 405v1h1v-1zM348 405v1h1v-1zM349 405v1h1v-1zM350 405v1h1v-1zM351 405v1h1v-1zM352 405v1h1v-1zM353 405v1h1v-1zM354 405v1h1v-1zM355 405v1h1v-1zM356 405v1h1v-1zM357 405v1h1v-1zM358 405v2h1v-2zM359 406v1h1v-1zM360 406v1h1v-1zM361 406v1h1v-1zM362 406v1h1v-1zM363 407v1h1v-1zM364 407v1h1v-1zM365 407v1h1v-1zM366 407v2h1v-2zM367 408v1h1v-1zM368 408v2h1v-2zM369 409v1h1v-1zM370 409v1h1v-1zM371 410v1h1v-1zM372 411v1h1v-1zM373 411v1h1v-1zM374 411v2h1v-2zM375 412v1h1v-1zM376 413v1h1v-1zM377 414v1h1v-1zM378 414v1h1v-1zM379 415v1h1v-1zM380 415v2h1v-2zM381 416v2h1v-2zM382 417v1h1v-1zM383 418v1h1v-1zM384 418v2h1v-2zM385 419v2h1v-2zM386 420v1h1v-1zM387 421v1h1v-1zM388 422v1h1v-1zM389 422v2h1v-2zM390 423v1h1v-1zM391 424v1h1v-1zM392 424v2h1v-2zM393 425v2h1v-2zM394 426v1h1v-1zM395 426v2h1v-2zM396 427v1h1v-1zM397 428v1h1v-1zM398 428v1h1v-1zM399 429v1h1v-1zM400 429v1h1v-1zM401 430v1h1v-1zM402 430v1h1v-1zM403 430v1h1v-1zM404 430v1h1v-1zM405 430v1h1v-1zM406 430v1h1v-1zM407 430v1h1v-1zM408 430v1h1v-1zM409 430v1h1v-1zM410 430v1h1v-1zM411 430v1h1v-1zM412 430v1h1v-1zM413 429v1h1v-1zM414 429v1h1v-1zM415 428v1h1v-1zM416 428v1h1v-1zM417 427v1h1v-1zM418 426v2h1v-2zM419 425v2h1v-2zM420 425v1h1v-1zM421 424v1h1v-1zM422 423v1h1v-1zM423 422v1h1v-1zM424 421v1h1v-1zM425 419v2h1v-2zM426 418v2h1v-2zM427 417v2h1v-2zM428 416v2h1v-2zM429 414v2h1v-2zM430 413v1h1v-1zM431 411v3h1v-3zM432 411v1h1v-1zM433 409v2h1v-2zM434 408v1h1v-1zM435 406v2h1v-2zM436 405v2h1v-2zM437 404v1h1v-1zM438 402v2h1v-2zM439 401v2h1v-2zM440 399v2h1v-2zM441 398v2h1v-2zM442 397v1h1v-1zM443 395v2h1v-2zM444 394v2h1v-2zM445 393v2h1v-2zM446 392v1h1v-1zM447 390v2h1v-2zM448 389v2h1v-2zM449 388v2h1v-2zM450 387v2h1v-2zM451 386v2h1v-2zM452 385v2h1v-2zM453 384v2h1v-2zM454 384v1h1v-1zM455 383v1h1v-1zM456 382v1h1v-1zM457 381v2h1v-2zM458 381v1h1v-1zM459 380v2h1v-2zM460 380v1h1v-1zM461 379v2h1v-2zM462 379v1h1v-1zM463 379v1h1v-1zM464 379v1h1v-1zM465 379v1h1v-1zM466 379v1h1v-1zM467 379v1h1v-1zM468 379v1h1v-1zM469 379v1h1v-1zM470 379v1h1v-1zM471 379v1h1v-1zM472 380v1h1v-1zM473 380v1h1v-1zM474 380v1h1v-1zM475 381v1h1v-1zM476 381v1h1v-1zM477 382v1h1v-1zM478 382v2h1v-2zM479 383v1h1v-1zM480 384v1h1v-1zM481 384v2h1v-2zM482 385v1h1v-1zM483 386v1h1v-1zM484 387v1h1v-1zM485 387v1h1v-1zM486 388v1h1v-1zM487 389v1h1v-1zM488 389v2h1v-2zM489 390v2h1v-2zM490 391v1h1v-1zM491 392v1h1v-1zM492 392v2h1v-2zM493 393v2h1v-2zM494 394v2h1v-2zM495 395v1h1v-1zM496 395v2h1v-2zM497 396v1h1v-1zM498 397v1h1v-1zM499 397v2h1v-2zM500 398v1h1v-1zM501 399v1h1v-1zM502 399v1h1v-1zM503 400v1h1v-1zM504 400v1h1v-1zM505 401v1h1v-1zM506 401v1h1v-1zM507 401v2h1v-2zM508 402v1h1v-1zM509 402v1h1v-1zM510 402v2h1v-2zM511 403v1h1v-1zM512 403v1h1v-1zM513 403v1h1v-1zM514 403v2h1v-2zM515 404v1h1v-1zM516 404v1h1v-1zM517 404v1h1v-1zM518 404v1h1v-1zM519 404v1h1v-1zM520 404v1h1v-1zM521 404v1h1v-1zM522 404v1h1v-1zM523 404v2h1v-2zM524 405v1h1v-1zM525 405v1h1v-1zM526 405v1h1v-1zM527 405v1h1v-1zM528 405v1h1v-1zM529 405v1h1v-1zM530 405v1h1v-1zM531 405v1h1v-1zM532 405v1h1v-1zM533 405v1h1v-1zM534 405v2h1v-2zM535 406v1h1v-1zM536 406v1h1v-1zM537 406v1h1v-1zM538 406v2h1v-2zM539 407v1h1v-1zM540 407v1h1v-1zM541 407v1h1v-1zM542 407v2h1v-2zM543 408v1h1v-1zM544 408v2h1v-2zM545 409v1h1v-1zM546 409v1h1v-1zM547 410v1h1v-1zM548 410v2h1v-2zM549 411v1h1v-1zM550 411v2h1v-2zM551 412v1h1v-1zM552 413v1h1v-1zM553 413v2h1v-2zM554 414v2h1v-2zM555 415v1h1v-1zM556 415v2h1v-2zM557 416v2h1v-2zM558 417v1h1v-1zM559 418v1h1v-1zM560 418v2h1v-2zM561 420v1h1v-1zM562 420v1h1v-1zM563 421v1h1v-1zM564 422v1h1v-1zM565 422v2h1v-2zM566 423v1h1v-1zM567 424v1h1v-1zM568 424v2h1v-2zM569 425v2h1v-2zM570 426v1h1v-1zM571 426v2h1v-2zM572 427v1h1v-1zM573 428v1h1v-1zM574 428v1h1v-1zM575 429v1h1v-1zM576 429v1h1v-1zM577 429v2h1v-2zM578 430v1h1v-1zM579 430v1h1v-1zM580 430v1h1v-1zM581 430v1h1v-1zM582 430v1h1v-1zM583 430v1h1v-1zM584 430v1h1v-1zM585 430v1h1v-1zM586 430v1h1v-1zM587 430v1h1v-1zM588 430v1h1v-1zM589 429v1h1v-1zM590 429v1h1v-1zM591 428v1h1v-1zM592 428v1h1v-1zM593 427v1h1v-1zM594 426v2h1v-2zM595 425v2h1v-2zM596 425v1h1v-1zM597 424v1h1v-1zM598 423v1h1v-1zM599 422v1h1v-1zM600 421v1h1v-1zM601 420v1h1v-1zM602 418v2h1v-2zM603 417v2h1v-2zM604 416v2h1v-2zM605 415v1h1v-1zM606 413v2h1v-2zM607 412v2h1v-2zM608 411v1h1v-1zM609 409v2h1v-2zM610 408v2h1v-2zM611 406v2h1v-2zM612 404v2h1v-2zM613 404v1h1v-1zM614 402v2h1v-2zM615 400v3h1v-3zM616 400v1h1v-1zM617 398v2h1v-2zM618 397v1h1v-1zM619 395v2h1v-2zM620 394v1h1v-1zM621 393v2h1v-2zM622 391v2h1v-2zM623 390v1h1v-1zM624 389v2h1v-2zM625 388v2h1v-2zM626 387v2h1v-2zM627 386v2h1v-2zM628 385v2h1v-2zM629 384v2h1v-2zM630 384v1h1v-1zM631 383v1h1v-1zM632 382v1h1v-1zM633 381v2h1v-2zM634 381v1h1v-1zM635 380v2h1v-2zM636 380v1h1v-1zM637 380v1h1v-1zM638 379v1h1v-1zM639 379v1h1v-1zM640 379v1h1v-1zM641 379v1h1v-1zM642 379v1h1v-1zM643 379v1h1v-1zM644 379v1h1v-1zM645 379v1h1v-1zM646 379v1h1v-1zM647 379v2h1v-2zM648 380v1h1v-1zM649 380v1h1v-1zM650 380v2h1v-2zM651 381v1h1v-1zM652 381v2h1v-2zM653 382v1h1v-1zM654 383v1h1v-1zM655 383v2h1v-2zM656 384v1h1v-1z"/>
<path fill="#ffff00" d="M72 462v1h1v-1zM73 460v2h1v-2zM74 457v3h1v-3zM75 454v3h1v-3zM76 452v2h1v-2zM77 449v3h1v-3zM78 446v3h1v-3zM79 445v1h1v-1zM80 442v3h1v-3zM81 439v3h1v-3zM82 437v2h1v-2zM83 434v3h1v-3zM84 431v3h1v-3zM85 428v3h1v-3zM86 425v3h1v-3zM87 423v2h1v-2zM88 420v3h1v-3zM89 416v4h1v-4zM90 413v3h1v-3zM91 411v2h1v-2zM92 408v3h1v-3zM93 407v1h1v-1zM94 404v3h1v-3zM95 402v2h1v-2zM96 400v2h1v-2zM97 398v2h1v-2zM98 396v2h1v-2zM99 394v2h1v-2zM100 392v2h1v-2zM101 390v2h1v-2zM102 388v2h1v-2zM103 387v2h1v-2zM104 385v2h1v-2zM105 384v1h1v-1zM106 382v2h1v-2zM107 382v1h1v-1zM108 381v1h1v-1zM109 380v1h1v-1zM110 380v1h1v-1zM111 379v2h1v-2zM112 379v1h1v-1zM113 379v1h1v-1zM114 379v1h1v-1zM115 379v1h1v-1zM116 379v1h1v-1zM117 379v1h1v-1zM118 379v2h1v-2zM119 380v1h1v-1zM120 381v1h1v-1zM121 381v2h1v-2zM122 382v1h1v-1zM123 383v1h1v-1zM124 384v1h1v-1zM125 385v1h1v-1zM126 386v2h1v-2zM127 387v2h1v-2zM128 388v2h1v-2zM129 390v1h1v-1zM130 391v2h1v-2zM131 393v1h1v-1zM132 394v2h1v-2zM133 395v2h1v-2zM134 397v2h1v-2zM135 399v2h1v-2zM136 401v2h1v-2zM137 402v2h1v-2zM138 404v1h1v-1zM139 405v2h1v-2zM140 407v1h1v-1zM141 408v1h1v-1zM142 409v2h1v-2zM143 411v1h1v-1zM144 412v2h1v-2zM145 413v2h1v-2zM146 415v1h1v-1zM147 416v2h1v-2zM148 417v2h1v-2zM149 418v2h1v-2zM150 419v3h1v-3zM151 421v1h1v-1zM152 422v1h1v-1zM153 422v2h1v-2zM154 423v2h1v-2zM155 424v2h1v-2zM156 425v1h1v-1zM157 426v1h1v-1zM158 426v2h1v-2zM159 427v1h1v-1zM160 427v2h1v-2zM161 428v1h1v-1zM162 428v1h1v-1zM163 429v1h1v-1zM164 429v1h1v-1zM165 429v1h1v-1zM166 430v1h1v-1zM167 430v1h1v-1zM168 430v1h1v-1zM169 430v1h1v-1zM170 430v1h1v-1zM171 430v1h1v-1zM172 430v2h1v-2zM173 431v1h1v-1zM174 431v1h1v-1zM175 431v1h1v-1zM176 431v1h1v-1zM177 431v1h1v-1zM178 431v1h1v-1zM179 431v2h1v-2zM180 432v1h1v-1zM181 432v1h1v-1zM182 432v1h1v-1zM183 433v1h1v-1zM184 433v1h1v-1zM185 433v2h1v-2zM186 434v1h1v-1zM187 434v2h1v-2zM188 435v1h1v-1zM189 436v1h1v-1zM190 436v2h1v-2zM191 437v2h1v-2zM192 438v2h1v-2zM193 439v2h1v-2zM194 440v2h1v-2zM195 441v2h1v-2zM196 442v2h1v-2zM197 444v1h1v-1zM198 445v1h1v-1zM199 445v2h1v-2zM200 447v2h1v-2zM201 449v1h1v-1zM202 450v1h1v-1zM203 451v2h1v-2zM204 452v2h1v-2zM205 454v2h1v-2zM206 455v2h1v-2zM207 457v2h1v-2zM208 458v2h1v-2zM209 460v2h1v-2zM210 461v2h1v-2zM211 463v2h1v-2zM212 464v2h1v-2zM213 466v2h1v-2zM214 467v2h1v-2zM215 469v2h1v-2zM216 470v2h1v-2zM217 472v1h1v-1zM218 473v2h1v-2zM219 474v2h1v-2zM220 475v2h1v-2zM221 477v2h1v-2zM222 478v2h1v-2zM223 479v1h1v-1zM224 480v1h1v-1zM225 480v2h1v-2zM226 481v1h1v-1zM227 482v1h1v-1zM228 482v1h1v-1zM229 482v1h1v-1zM230 482v1h1v-1zM231 482v1h1v-1zM232 482v1h1v-1zM233 482v1h1v-1zM234 481v2h1v-2zM235 481v1h1v-1zM236 480v1h1v-1zM237 480v1h1v-1zM238 479v1h1v-1zM239 478v1h1v-1zM240 476v2h1v-2zM241 475v2h1v-2zM242 474v1h1v-1zM243 472v2h1v-2zM244 470v2h1v-2zM245 469v2h1v-2zM246 467v2h1v-2zM247 465v2h1v-2zM248 462v3h1v-3zM249 460v2h1v-2zM250 458v2h1v-2zM251 454v4h1v-4zM252 452v2h1v-2zM253 449v3h1v-3zM254 446v3h1v-3zM255 444v2h1v-2zM256 442v2h1v-2zM257 438v4h1v-4zM258 437v1h1v-1zM259 434v3h1v-3zM260 431v3h1v-3zM261 428v3h1v-3zM262 425v3h1v-3zM263 423v2h1v-2zM264 420v3h1v-3zM265 417v3h1v-3zM266 415v2h1v-2zM267 412v3h1v-3zM268 409v3h1v-3zM269 407v2h1v-2zM270 404v3h1v-3zM271 402v2h1v-2zM272 400v2h1v-2zM273 398v2h1v-2zM274 396v2h1v-2zM275 394v2h1v-2zM276 392v2h1v-2zM277 390v2h1v-2zM278 388v2h1v-2zM279 387v2h1v-2zM280 385v2h1v-2zM281 384v2h1v-2zM282 383v2h1v-2zM283 382v2h1v-2zM284 381v1h1v-1zM285 380v1h1v-1zM286 380v1h1v-1zM287 379v1h1v-1zM288 379v1h1v-1zM289 379v1h1v-1zM290 379v1h1v-1zM291 379v1h1v-1zM292 379v1h1v-1zM293 379v1h1v-1zM294 379v2h1v-2zM295 380v1h1v-1zM296 380v2h1v-2zM297 381v1h1v-1zM298 382v1h1v-1zM299 383v1h1v-1zM300 384v1h1v-1zM301 385v1h1v-1zM302 386v2h1v-2zM303 387v2h1v-2zM304 388v2h1v-2zM305 390v1h1v-1zM306 391v2h1v-2zM307 393v1h1v-1zM308 394v2h1v-2zM309 395v2h1v-2zM310 397v2h1v-2zM311 399v1h1v-1zM312 400v3h1v-3zM313 402v1h1v-1zM314 403v3h1v-3zM315 405v1h1v-1zM316 406v3h1v-3zM317 408v1h1v-1zM318 409v2h1v-2zM319 411v1h1v-1zM320 412v2h1v-2zM321 413v2h1v-2zM322 415v1h1v-1zM323 416v2h1v-2zM324 417v2h1v-2zM325 418v2h1v-2zM326 419v2h1v-2zM327 421v1h1v-1zM328 422v1h1v-1zM329 422v2h1v-2zM330 423v2h1v-2zM331 424v2h1v-2zM332 425v1h1v-1zM333 426v1h1v-1zM334 426v2h1v-2zM335 427v1h1v-1zM336 427v2h1v-2zM337 428v1h1v-1zM338 428v1h1v-1zM339 429v1h1v-1zM340 429v1h1v-1zM341 429v1h1v-1zM342 429v2h1v-2zM343 430v1h1v-1zM344 430v1h1v-1zM345 430v1h1v-1zM346 430v1h1v-1zM347 430v1h1v-1zM348 430v2h1v-2zM349 431v1h1v-1zM350 431v1h1v-1zM351 431v1h1v-1zM352 431v1h1v-1zM353 431v1h1v-1zM354 431v1h1v-1zM355 431v2h1v-2zM356 432v1h1v-1zM357 432v1h1v-1zM358 432v2h1v-2zM359 433v1h1v-1zM360 433v1h1v-1zM361 433v2h1v-2zM362 434v1h1v-1zM363 434v2h1v-2zM364 435v1h1v-1zM365 436v1h1v-1zM366 436v2h1v-2zM367 437v2h1v-2zM368 438v1h1v-1zM369 439v1h1v-1zM370 440v1h1v-1zM371 441v2h1v-2zM372 442v1h1v-1zM373 443v2h1v-2zM374 444v2h1v-2zM375 445v2h1v-2zM376 447v2h1v-2zM377 449v1h1v-1zM378 449v2h1v-2zM379 451v2h1v-2zM380 452v2h1v-2zM381 454v2h1v-2zM382 455v2h1v-2zM383 457v2h1v-2zM384 458v2h1v-2zM385 460v2h1v-2zM386 461v2h1v-2zM387 463v2h1v-2zM388 464v2h1v-2zM389 466v2h1v-2zM390 467v2h1v-2zM391 469v2h1v-2zM392 470v2h1v-2zM393 472v1h1v-1zM394 473v2h1v-2zM395 474v2h1v-2zM396 475v2h1v-2zM397 477v1h1v-1zM398 478v1h1v-1zM399 479v1h1v-1zM400 479v2h1v-2zM401 480v2h1v-2zM402 481v1h1v-1zM403 482v1h1v-1zM404 482v1h1v-1zM405 482v1h1v-1zM406 482v1h1v-1zM407 482v1h1v-1zM408 482v1h1v-1zM409 482v1h1v-1zM410 481v2h1v-2zM411 481v1h1v-1zM412 480v1h1v-1zM413 479v2h1v-2zM414 479v1h1v-1zM415 477v2h1v-2zM416 476v1h1v-1zM417 475v2h1v-2zM418 474v1h1v-1zM419 472v2h1v-2zM420 470v2h1v-2zM421 469v2h1v-2zM422 467v2h1v-2zM423 465v2h1v-2zM424 462v3h1v-3zM425 460v2h1v-2zM426 458v2h1v-2zM427 455v3h1v-3zM428 453v2h1v-2zM429 449v4h1v-4zM430 448v1h1v-1zM431 444v4h1v-4zM432 442v2h1v-2zM433 438v4h1v-4zM434 437v1h1v-1zM435 434v3h1v-3zM436 431v3h1v-3zM437 428v3h1v-3zM438 425v3h1v-3zM439 423v2h1v-2zM440 420v3h1v-3zM441 417v3h1v-3zM442 415v2h1v-2zM443 412v3h1v-3zM444 409v3h1v-3zM445 407v2h1v-2zM446 404v3h1v-3zM447 402v2h1v-2zM448 400v2h1v-2zM449 398v2h1v-2zM450 396v2h1v-2zM451 394v2h1v-2zM452 392v2h1v-2zM453 390v2h1v-2zM454 388v2h1v-2zM455 387v2h1v-2zM456 385v2h1v-2zM457 384v2h1v-2zM458 383v2h1v-2zM459 382v2h1v-2zM460 381v1h1v-1zM461 380v1h1v-1zM462 380v1h1v-1zM463 379v1h1v-1zM464 379v1h1v-1zM465 379v1h1v-1zM466 379v1h1v-1zM467 379v1h1v-1zM468 379v1h1v-1zM469 379v1h1v-1zM470 379v2h1v-2zM471 380v1h1v-1zM472 380v2h1v-2zM473 381v2h1v-2zM474 382v1h1v-1zM475 383v2h1v-2zM476 384v1h1v-1zM477 385v1h1v-1zM478 386v2h1v-2zM479 387v2h1v-2zM480 388v2h1v-2zM481 390v1h1v-1zM482 391v2h1v-2zM483 393v2h1v-2zM484 395v1h1v-1zM485 395v2h1v-2zM486 397v2h1v-2zM487 399v1h1v-1zM488 400v2h1v-2zM489 402v1h1v-1zM490 403v2h1v-2zM491 405v1h1v-1zM492 406v2h1v-2zM493 408v1h1v-1zM494 409v3h1v-3zM495 411v1h1v-1zM496 412v2h1v-2zM497 413v2h1v-2zM498 415v1h1v-1zM499 416v2h1v-2zM500 417v2h1v-2zM501 418v2h1v-2zM502 419v2h1v-2zM503 421v1h1v-1zM504 422v1h1v-1zM505 422v2h1v-2zM506 423v2h1v-2zM507 424v2h1v-2zM508 425v1h1v-1zM509 426v1h1v-1zM510 426v2h1v-2zM511 427v1h1v-1zM512 427v2h1v-2zM513 428v1h1v-1zM514 428v1h1v-1zM515 429v1h1v-1zM516 429v1h1v-1zM517 429v1h1v-1zM518 429v2h1v-2zM519 430v1h1v-1zM520 430v1h1v-1zM521 430v1h1v-1zM522 430v1h1v-1zM523 430v1h1v-1zM524 430v2h1v-2zM525 431v1h1v-1zM526 431v1h1v-1zM527 431v1h1v-1zM528 431v1h1v-1zM529 431v1h1v-1zM530 431v1h1v-1zM531 431v2h1v-2zM532 432v1h1v-1zM533 432v1h1v-1zM534 432v1h1v-1zM535 433v1h1v-1zM536 433v1h1v-1zM537 433v2h1v-2zM538 434v1h1v-1zM539 435v1h1v-1zM540 435v1h1v-1zM541 436v1h1v-1zM542 436v2h1v-2zM543 437v1h1v-1zM544 438v1h1v-1zM545 439v1h1v-1zM546 440v1h1v-1zM547 441v1h1v-1zM548 442v1h1v-1zM549 443v2h1v-2zM550 444v2h1v-2zM551 445v2h1v-2zM552 447v1h1v-1zM553 448v2h1v-2zM554 450v2h1v-2zM555 452v1h1v-1zM556 452v2h1v-2zM557 454v2h1v-2zM558 456v1h1v-1zM559 457v2h1v-2zM560 458v3h1v-3zM561 461v1h1v-1zM562 461v2h1v-2zM563 463v2h1v-2zM564 464v2h1v-2zM565 466v2h1v-2zM566 467v2h1v-2zM567 469v2h1v-2zM568 470v2h1v-2zM569 472v1h1v-1zM570 473v2h1v-2zM571 474v2h1v-2zM572 475v2h1v-2zM573 477v1h1v-1zM574 478v1h1v-1zM575 479v1h1v-1zM576 479v2h1v-2zM577 480v1h1v-1zM578 481v1h1v-1zM579 481v2h1v-2zM580 482v1h1v-1zM581 482v1h1v-1zM582 482v1h1v-1zM583 482v1h1v-1zM584 482v1h1v-1zM585 482v1h1v-1zM586 481v2h1v-2zM587 481v1h1v-1zM588 480v2h1v-2zM589 479v2h1v-2zM590 479v1h1v-1zM591 478v1h1v-1zM592 476v2h1v-2zM593 475v2h1v-2zM594 474v1h1v-1zM595 472v2h1v-2zM596 470v2h1v-2zM597 469v2h1v-2zM598 467v2h1v-2zM599 465v2h1v-2zM600 462v3h1v-3zM601 460v2h1v-2zM602 458v2h1v-2zM603 455v3h1v-3zM604 453v2h1v-2zM605 450v3h1v-3zM606 448v2h1v-2zM607 445v3h1v-3zM608 442v3h1v-3zM609 440v2h1v-2zM610 437v3h1v-3zM611 433v4h1v-4zM612 430v3h1v-3zM613 428v2h1v-2zM614 426v2h1v-2zM615 421v5h1v-5zM616 420v1h1v-1zM617 417v3h1v-3zM618 415v2h1v-2zM619 411v4h1v-4zM620 409v2h1v-2zM621 407v2h1v-2zM622 403v4h1v-4zM623 402v1h1v-1zM624 400v2h1v-2zM625 398v2h1v-2zM626 396v2h1v-2zM627 394v2h1v-2zM628 392v2h1v-2zM629 390v2h1v-2zM630 388v2h1v-2zM631 387v2h1v-2zM632 385v2h1v-2zM633 384v2h1v-2zM634 383v2h1v-2zM635 382v2h1v-2zM636 381v2h1v-2zM637 380v2h1v-2zM638 380v1h1v-1zM639 379v2h1v-2zM640 379v1h1v-1zM641 379v1h1v-1zM642 379v1h1v-1zM643 379v1h1v-1zM644 379v1h1v-1zM645 379v1h1v-1zM646 380v1h1v-1zM647 380v1h1v-1zM648 381v1h1v-1zM649 381v2h1v-2zM650 382v2h1v-2zM651 383v2h1v-2zM652 384v2h1v-2zM653 385v2h1v-2zM654 386v2h1v-2zM655 388v1h1v-1zM656 389v1h1v-1z"/>
<path fill="#ff0000" d="M72 449v1h1v-1zM73 450v2h1v-2zM74 452v2h1v-2zM75 454v2h1v-2zM76 456v2h1v-2zM77 458v2h1v-2zM78 459v2h1v-2zM79 461v1h1v-1zM80 462v2h1v-2zM81 464v1h1v-1zM82 465v2h1v-2zM83 467v2h1v-2zM84 468v2h1v-2zM85 470v2h1v-2zM86 471v2h1v-2zM87 473v1h1v-1zM88 474v1h1v-1zM89 475v2h1v-2zM90 476v1h1v-1zM91 477v1h1v-1zM92 477v1h1v-1zM93 478v1h1v-1zM94 478v1h1v-1zM95 478v1h1v-1zM96 477v1h1v-1zM97 477v1h1v-1zM98 476v2h1v-2zM99 475v2h1v-2zM100 474v2h1v-2zM101 473v2h1v-2zM102 471v2h1v-2zM103 470v2h1v-2zM104 467v3h1v-3zM105 465v2h1v-2zM106 462v3h1v-3zM107 460v2h1v-2zM108 457v3h1v-3zM109 455v2h1v-2zM110 453v2h1v-2zM111 449v4h1v-4zM112 446v3h1v-3zM113 443v3h1v-3zM114 440v3h1v-3zM115 437v3h1v-3zM116 433v4h1v-4zM117 430v3h1v-3zM118 425v5h1v-5zM119 422v3h1v-3zM120 418v4h1v-4zM121 415v3h1v-3zM122 414v1h1v-1zM123 411v3h1v-3zM124 408v3h1v-3zM125 405v3h1v-3zM126 402v3h1v-3zM127 400v2h1v-2zM128 397v3h1v-3zM129 395v2h1v-2zM130 393v2h1v-2zM131 391v2h1v-2zM132 390v1h1v-1zM133 388v2h1v-2zM134 387v1h1v-1zM135 385v2h1v-2zM136 384v2h1v-2zM137 384v1h1v-1zM138 384v1h1v-1zM139 383v2h1v-2zM140 383v1h1v-1zM141 383v1h1v-1zM142 384v1h1v-1zM143 384v1h1v-1zM144 385v1h1v-1zM145 385v2h1v-2zM146 386v2h1v-2zM147 387v2h1v-2zM148 388v2h1v-2zM149 390v1h1v-1zM150 391v2h1v-2zM151 393v1h1v-1zM152 394v2h1v-2zM153 396v1h1v-1zM154 397v2h1v-2zM155 399v2h1v-2zM156 401v2h1v-2zM157 402v2h1v-2zM158 404v2h1v-2zM159 406v2h1v-2zM160 408v1h1v-1zM161 409v2h1v-2zM162 411v2h1v-2zM163 412v2h1v-2zM164 414v2h1v-2zM165 415v3h1v-3zM166 417v2h1v-2zM167 419v1h1v-1zM168 420v2h1v-2zM169 421v2h1v-2zM170 422v2h1v-2zM171 423v2h1v-2zM172 424v2h1v-2zM173 425v1h1v-1zM174 426v1h1v-1zM175 427v1h1v-1zM176 427v1h1v-1zM177 428v1h1v-1zM178 428v2h1v-2zM179 429v1h1v-1zM180 430v1h1v-1zM181 430v1h1v-1zM182 431v1h1v-1zM183 431v2h1v-2zM184 432v1h1v-1zM185 433v1h1v-1zM186 433v2h1v-2zM187 434v1h1v-1zM188 435v1h1v-1zM189 435v2h1v-2zM190 436v2h1v-2zM191 437v2h1v-2zM192 438v2h1v-2zM193 440v1h1v-1zM194 441v2h1v-2zM195 442v2h1v-2zM196 443v2h1v-2zM197 445v1h1v-1zM198 446v1h1v-1zM199 447v2h1v-2zM200 448v3h1v-3zM201 451v2h1v-2zM202 452v1h1v-1zM203 453v2h1v-2zM204 455v2h1v-2zM205 457v2h1v-2zM206 458v2h1v-2zM207 460v2h1v-2zM208 462v2h1v-2zM209 464v1h1v-1zM210 465v2h1v-2zM211 467v2h1v-2zM212 468v2h1v-2zM213 470v2h1v-2zM214 471v2h1v-2zM215 473v1h1v-1zM216 474v1h1v-1zM217 475v1h1v-1zM218 476v1h1v-1zM219 476v2h1v-2zM220 477v1h1v-1zM221 477v2h1v-2zM222 478v1h1v-1zM223 478v1h1v-1zM224 477v1h1v-1zM225 477v1h1v-1zM226 476v1h1v-1zM227 475v1h1v-1zM228 474v1h1v-1zM229 472v2h1v-2zM230 471v2h1v-2zM231 469v2h1v-2zM232 467v2h1v-2zM233 465v2h1v-2zM234 462v3h1v-3zM235 460v2h1v-2zM236 457v3h1v-3zM237 456v1h1v-1zM238 453v3h1v-3zM239 450v3h1v-3zM240 447v3h1v-3zM241 443v4h1v-4zM242 440v3h1v-3zM243 437v3h1v-3zM244 433v4h1v-4zM245 430v3h1v-3zM246 427v3h1v-3zM247 423v4h1v-4zM248 420v3h1v-3zM249 417v3h1v-3zM250 414v3h1v-3zM251 409v5h1v-5zM252 406v3h1v-3zM253 404v2h1v-2zM254 401v3h1v-3zM255 399v2h1v-2zM256 397v2h1v-2zM257 394v3h1v-3zM258 393v1h1v-1zM259 391v2h1v-2zM260 390v1h1v-1zM261 388v2h1v-2zM262 387v1h1v-1zM263 386v1h1v-1zM264 385v1h1v-1zM265 384v1h1v-1zM266 384v1h1v-1zM267 383v2h1v-2zM268 383v1h1v-1zM269 383v1h1v-1zM270 384v1h1v-1zM271 384v1h1v-1zM272 385v1h1v-1zM273 385v2h1v-2zM274 386v2h1v-2zM275 387v2h1v-2zM276 388v2h1v-2zM277 390v1h1v-1zM278 391v2h1v-2zM279 392v2h1v-2zM280 394v2h1v-2zM281 396v1h1v-1zM282 397v2h1v-2zM283 399v3h1v-3zM284 401v2h1v-2zM285 403v2h1v-2zM286 405v2h1v-2zM287 407v1h1v-1zM288 408v2h1v-2zM289 410v2h1v-2zM290 412v1h1v-1zM291 412v3h1v-3zM292 415v1h1v-1zM293 416v1h1v-1zM294 417v2h1v-2zM295 419v1h1v-1zM296 419v3h1v-3zM297 421v1h1v-1zM298 422v1h1v-1zM299 423v1h1v-1zM300 424v1h1v-1zM301 425v1h1v-1zM302 425v2h1v-2zM303 426v2h1v-2zM304 427v1h1v-1zM305 428v1h1v-1zM306 428v2h1v-2zM307 429v1h1v-1zM308 430v1h1v-1zM309 430v1h1v-1zM310 431v1h1v-1zM311 431v2h1v-2zM312 432v2h1v-2zM313 433v1h1v-1zM314 433v2h1v-2zM315 434v1h1v-1zM316 435v1h1v-1zM317 436v1h1v-1zM318 436v2h1v-2zM319 437v2h1v-2zM320 438v2h1v-2zM321 439v2h1v-2zM322 440v2h1v-2zM323 441v2h1v-2zM324 443v1h1v-1zM325 444v2h1v-2zM326 445v2h1v-2zM327 447v2h1v-2zM328 448v2h1v-2zM329 450v2h1v-2zM330 452v1h1v-1zM331 453v2h1v-2zM332 455v2h1v-2zM333 457v2h1v-2zM334 458v2h1v-2zM335 460v2h1v-2zM336 462v2h1v-2zM337 464v1h1v-1zM338 465v2h1v-2zM339 467v2h1v-2zM340 468v2h1v-2zM341 470v2h1v-2zM342 471v2h1v-2zM343 473v2h1v-2zM344 474v2h1v-2zM345 475v2h1v-2zM346 476v1h1v-1zM347 477v1h1v-1zM348 477v1h1v-1zM349 478v1h1v-1zM350 478v1h1v-1zM351 478v1h1v-1zM352 477v1h1v-1zM353 477v1h1v-1zM354 476v1h1v-1zM355 475v2h1v-2zM356 474v1h1v-1zM357 473v1h1v-1zM358 471v2h1v-2zM359 470v1h1v-1zM360 468v2h1v-2zM361 466v2h1v-2zM362 464v2h1v-2zM363 461v3h1v-3zM364 458v3h1v-3zM365 456v2h1v-2zM366 453v3h1v-3zM367 450v3h1v-3zM368 447v3h1v-3zM369 443v4h1v-4zM370 440v3h1v-3zM371 435v5h1v-5zM372 434v1h1v-1zM373 430v4h1v-4zM374 427v3h1v-3zM375 424v3h1v-3zM376 419v5h1v-5zM377 417v2h1v-2zM378 414v3h1v-3zM379 411v3h1v-3zM380 408v3h1v-3zM381 405v3h1v-3zM382 402v3h1v-3zM383 400v2h1v-2zM384 398v2h1v-2zM385 395v3h1v-3zM386 393v2h1v-2zM387 391v2h1v-2zM388 390v2h1v-2zM389 388v2h1v-2zM390 387v2h1v-2zM391 386v1h1v-1zM392 385v1h1v-1zM393 384v2h1v-2zM394 384v1h1v-1zM395 383v2h1v-2zM396 383v1h1v-1zM397 383v1h1v-1zM398 384v1h1v-1zM399 384v1h1v-1zM400 384v2h1v-2zM401 386v1h1v-1zM402 387v1h1v-1zM403 388v1h1v-1zM404 389v2h1v-2zM405 390v2h1v-2zM406 392v1h1v-1zM407 393v2h1v-2zM408 395v1h1v-1zM409 396v2h1v-2zM410 398v2h1v-2zM411 400v2h1v-2zM412 401v1h1v-1zM413 402v3h1v-3zM414 405v1h1v-1zM415 406v2h1v-2zM416 408v1h1v-1zM417 409v2h1v-2zM418 411v2h1v-2zM419 412v2h1v-2zM420 414v2h1v-2zM421 415v2h1v-2zM422 417v1h1v-1zM423 418v2h1v-2zM424 419v2h1v-2zM425 420v2h1v-2zM426 422v1h1v-1zM427 423v1h1v-1zM428 424v1h1v-1zM429 425v1h1v-1zM430 426v1h1v-1zM431 426v2h1v-2zM432 427v1h1v-1zM433 428v1h1v-1zM434 429v1h1v-1zM435 429v1h1v-1zM436 430v1h1v-1zM437 430v1h1v-1zM438 431v1h1v-1zM439 431v2h1v-2zM440 432v1h1v-1zM441 433v1h1v-1zM442 433v2h1v-2zM443 434v1h1v-1zM444 435v1h1v-1zM445 435v2h1v-2zM446 436v2h1v-2zM447 437v2h1v-2zM448 438v2h1v-2zM449 439v2h1v-2zM450 440v2h1v-2zM451 441v2h1v-2zM452 443v1h1v-1zM453 444v2h1v-2zM454 445v2h1v-2zM455 447v2h1v-2zM456 448v2h1v-2zM457 450v2h1v-2zM458 452v1h1v-1zM459 453v3h1v-3zM460 456v2h1v-2zM461 457v2h1v-2zM462 459v2h1v-2zM463 461v2h1v-2zM464 463v1h1v-1zM465 464v2h1v-2zM466 466v2h1v-2zM467 468v1h1v-1zM468 469v2h1v-2zM469 470v1h1v-1zM470 471v2h1v-2zM471 473v1h1v-1zM472 474v2h1v-2zM473 475v2h1v-2zM474 476v1h1v-1zM475 476v2h1v-2zM476 477v1h1v-1zM477 477v2h1v-2zM478 478v1h1v-1zM479 478v1h1v-1zM480 477v2h1v-2zM481 477v1h1v-1zM482 476v2h1v-2zM483 475v2h1v-2zM484 474v1h1v-1zM485 473v2h1v-2zM486 472v1h1v-1zM487 470v2h1v-2zM488 468v2h1v-2zM489 466v2h1v-2zM490 464v2h1v-2zM491 461v3h1v-3zM492 459v2h1v-2zM493 456v3h1v-3zM494 451v5h1v-5zM495 450v1h1v-1zM496 447v3h1v-3zM497 444v3h1v-3zM498 440v4h1v-4zM499 437v3h1v-3zM500 434v3h1v-3zM501 430v4h1v-4zM502 427v3h1v-3zM503 424v3h1v-3zM504 420v4h1v-4zM505 417v3h1v-3zM506 414v3h1v-3zM507 411v3h1v-3zM508 408v3h1v-3zM509 405v3h1v-3zM510 403v2h1v-2zM511 400v3h1v-3zM512 398v2h1v-2zM513 395v3h1v-3zM514 393v2h1v-2zM515 392v1h1v-1zM516 390v2h1v-2zM517 388v2h1v-2zM518 387v2h1v-2zM519 386v1h1v-1zM520 385v1h1v-1zM521 384v2h1v-2zM522 384v1h1v-1zM523 383v2h1v-2zM524 383v1h1v-1zM525 383v2h1v-2zM526 384v1h1v-1zM527 384v1h1v-1zM528 385v1h1v-1zM529 386v1h1v-1zM530 386v2h1v-2zM531 387v2h1v-2zM532 389v1h1v-1zM533 390v1h1v-1zM534 391v2h1v-2zM535 392v3h1v-3zM536 395v1h1v-1zM537 395v2h1v-2zM538 397v3h1v-3zM539 400v1h1v-1zM540 400v2h1v-2zM541 402v2h1v-2zM542 404v2h1v-2zM543 406v1h1v-1zM544 407v2h1v-2zM545 409v2h1v-2zM546 411v1h1v-1zM547 412v2h1v-2zM548 414v1h1v-1zM549 415v2h1v-2zM550 417v1h1v-1zM551 418v2h1v-2zM552 419v2h1v-2zM553 420v3h1v-3zM554 422v2h1v-2zM555 423v1h1v-1zM556 424v1h1v-1zM557 424v2h1v-2zM558 426v1h1v-1zM559 426v2h1v-2zM560 427v2h1v-2zM561 428v1h1v-1zM562 428v2h1v-2zM563 429v1h1v-1zM564 430v1h1v-1zM565 430v1h1v-1zM566 431v1h1v-1zM567 431v2h1v-2zM568 432v1h1v-1zM569 433v1h1v-1zM570 433v2h1v-2zM571 434v1h1v-1zM572 435v1h1v-1zM573 435v2h1v-2zM574 436v2h1v-2zM575 437v2h1v-2zM576 438v2h1v-2zM577 439v2h1v-2zM578 440v2h1v-2zM579 441v2h1v-2zM580 443v1h1v-1zM581 444v2h1v-2zM582 445v3h1v-3zM583 447v2h1v-2zM584 449v1h1v-1zM585 450v2h1v-2zM586 451v3h1v-3zM587 454v1h1v-1zM588 455v2h1v-2zM589 456v3h1v-3zM590 459v1h1v-1zM591 460v2h1v-2zM592 462v2h1v-2zM593 463v2h1v-2zM594 465v2h1v-2zM595 467v1h1v-1zM596 468v2h1v-2zM597 470v1h1v-1zM598 471v2h1v-2zM599 472v2h1v-2zM600 474v1h1v-1zM601 475v1h1v-1zM602 476v1h1v-1zM603 476v2h1v-2zM604 477v1h1v-1zM605 477v1h1v-1zM606 478v1h1v-1zM607 478v1h1v-1zM608 477v2h1v-2zM609 477v1h1v-1zM610 476v2h1v-2zM611 475v2h1v-2zM612 474v1h1v-1zM613 473v1h1v-1zM614 472v1h1v-1zM615 469v3h1v-3zM616 468v1h1v-1zM617 466v2h1v-2zM618 464v2h1v-2zM619 460v4h1v-4zM620 459v1h1v-1zM621 456v3h1v-3zM622 452v4h1v-4zM623 450v2h1v-2zM624 447v3h1v-3zM625 444v3h1v-3zM626 440v4h1v-4zM627 437v3h1v-3zM628 434v3h1v-3zM629 430v4h1v-4zM630 427v3h1v-3zM631 424v3h1v-3zM632 421v3h1v-3zM633 417v4h1v-4zM634 414v3h1v-3zM635 411v3h1v-3zM636 408v3h1v-3zM637 405v3h1v-3zM638 403v2h1v-2zM639 400v3h1v-3zM640 398v2h1v-2zM641 395v3h1v-3zM642 393v2h1v-2zM643 391v2h1v-2zM644 389v2h1v-2zM645 388v1h1v-1zM646 386v2h1v-2zM647 385v2h1v-2zM648 385v1h1v-1zM649 384v1h1v-1zM650 384v1h1v-1zM651 383v1h1v-1zM652 383v1h1v-1zM653 383v2h1v-2zM654 384v1h1v-1zM655 384v1h1v-1zM656 385v1h1v-1z"/>
<rect x="67" y="275" width="1" height="312" fill="#fff"/>
<rect x="61" y="586" width="6" height="1" fill="#fff"/>
<rect x="64" y="560" width="3" height="1" fill="#fff"/>
<rect x="61" y="534" width="6" height="1" fill="#fff"/>
<rect x="64" y="508" width="3" height="1" fill="#fff"/>
<rect x="61" y="482" width="6" height="1" fill="#fff"/>
<rect x="64" y="456" width="3" height="1" fill="#fff"/>
<rect x="61" y="430" width="6" height="1" fill="#fff"/>
<rect x="64" y="405" width="3" height="1" fill="#fff"/>
<rect x="61" y="379" width="6" height="1" fill="#fff"/>
<rect x="64" y="353" width="3" height="1" fill="#fff"/>
<rect x="61" y="327" width="6" height="1" fill="#fff"/>
<rect x="64" y="301" width="3" height="1" fill="#fff"/>
<rect x="61" y="275" width="6" height="1" fill="#fff"/>
<rect x="72" y="591" width="586" height="1" fill="#fff"/>
<rect x="91" y="592" width="1" height="3" fill="#fff"/>
<rect x="128" y="592" width="1" height="6" fill="#fff"/>
<rect x="164" y="592" width="1" height="3" fill="#fff"/>
<rect x="201" y="592" width="1" height="6" fill="#fff"/>
<rect x="237" y="592" width="1" height="3" fill="#fff"/>
<rect x="274" y="592" width="1" height="6" fill="#fff"/>
<rect x="311" y="592" width="1" height="3" fill="#fff"/>
<rect x="347" y="592" width="1" height="6" fill="#fff"/>
<rect x="384" y="592" width="1" height="3" fill="#fff"/>
<rect x="420" y="592" width="1" height="6" fill="#fff"/>
<rect x="457" y="592" width="1" height="3" fill="#fff"/>
<rect x="493" y="592" width="1" height="6" fill="#fff"/>
<rect x="530" y="592" width="1" height="3" fill="#fff"/>
<rect x="567" y="592" width="1" height="6" fill="#fff"/>
<rect x="603" y="592" width="1" height="3" fill="#fff"/>
<rect x="640" y="592" width="1" height="6" fill="#fff"/>
<rect x="663" y="293" width="13" height="4" fill="#ff0000"/>
<rect x="663" y="309" width="13" height="4" fill="#ffff00"/>
<rect x="663" y="325" width="13" height="4" fill="#80ffff"/>
<rect x="663" y="341" width="13" height="4" fill="#0000ff"/>
<rect x="663" y="357" width="13" height="4" fill="#ff00ff"/>
<rect x="663" y="373" width="13" height="4" fill="#ff8000"/>
</svg>
<div class="yl" style="top:581px">-30</div>
<div class="yl" style="top:529px">-20</div>
<div class="yl" style="top:477px">-10</div>
<div class="yl" style="top:425px">0</div>
<div class="yl" style="top:374px">10</div>
<div class="yl" style="top:322px">20</div>
<div class="yl" style="top:270px">30</div>
<div class="xl" style="left:107px">60.0</div>
<div class="xl" style="left:180px">70.0</div>
<div class="xl" style="left:253px">80.0</div>
<div class="xl" style="left:326px">90.0</div>
<div class="xl" style="left:399px">100.0</div>
<div class="xl" style="left:472px">110.0</div>
<div class="xl" style="left:546px">120.0</div>
<div class="xl" style="left:619px">130.0</div>
<div class="lg" style="top:289px">横摇</div>
<div class="lg" style="top:305px">纵摇</div>
<div class="lg" style="top:321px">垂荡</div>
<div class="lg" style="top:337px">艏向</div>
<div class="lg" style="top:353px">横移</div>
<div class="lg" style="top:369px">纵移</div>
</body>
</html>
